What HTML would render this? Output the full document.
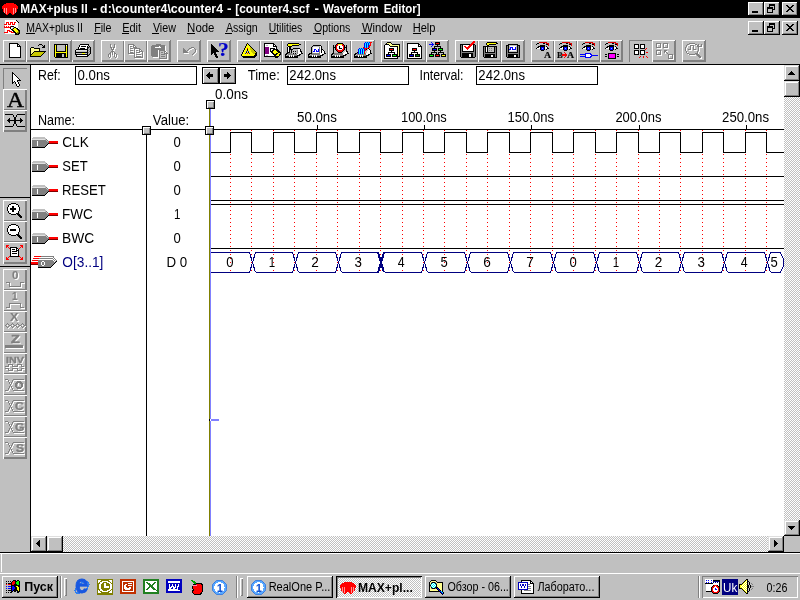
<!DOCTYPE html>
<html lang="en"><head><meta charset="utf-8"><title>MAX+plus II - d:\counter4\counter4 - [counter4.scf - Waveform Editor]</title>
<style>
html,body{margin:0;padding:0;}
body{width:800px;height:600px;overflow:hidden;background:#c0c0c0;position:relative;font-family:"Liberation Sans",sans-serif;font-size:13px;}
div,span,svg.i,b.t,i.ul{position:absolute;box-sizing:border-box;}
i.ul{height:1px;background:#000;}
.t{white-space:nowrap;line-height:1;display:block;will-change:transform;-webkit-text-stroke:0.15px;}
svg.i{overflow:visible;shape-rendering:crispEdges;}
svg.tx{font-family:'Liberation Sans',sans-serif;will-change:opacity;}
.up{box-shadow:inset 1px 1px 0 #fff,inset -1px -1px 0 #808080;background:#c0c0c0;}
.dn1{box-shadow:inset 1px 1px 0 #808080;background:#c0c0c0;}
.sb{box-shadow:inset -1px -1px 0 #000,inset 1px 1px 0 #dfdfdf,inset -2px -2px 0 #808080,inset 2px 2px 0 #fff;background:#c0c0c0;}
.tbl{box-shadow:inset -1px 0 0 #808080,inset 1px 1px 0 #fff,inset -2px -2px 0 #808080;background:#c0c0c0;}
.pbl{box-shadow:inset 1px 1px 0 #fff,inset -2px -2px 0 #808080;background:#c0c0c0;}
.tb{box-shadow:inset 1px 1px 0 #fff,inset -1px -2px 0 #808080;background:#c0c0c0;}
.pb{box-shadow:inset 1px 1px 0 #fff,inset -2px -1px 0 #808080;background:#c0c0c0;}
.up2{box-shadow:inset -1px -1px 0 #000,inset 1px 1px 0 #fff,inset -2px -2px 0 #808080;background:#c0c0c0;}
.dn{box-shadow:inset 1px 1px 0 #808080,inset -1px -1px 0 #fff;background:#c0c0c0;}
.dn2{box-shadow:inset 1px 1px 0 #000,inset -1px -1px 0 #fff,inset 2px 2px 0 #808080;}
.chk{background:conic-gradient(#fff 25%,#c0c0c0 0 50%,#fff 0 75%,#c0c0c0 0) 0 0/2px 2px;}
</style></head><body>
<div id="titlebar" style="left:0;top:0;width:800px;height:18px;background:#000"></div>
<svg class="i tx" style="left:0;top:0" width="1" height="1"><text transform="translate(20.20,13) scale(0.9119,0.9890)" font-size="13" fill="#fff" font-weight="bold">MAX+plus II</text></svg>
<svg class="i tx" style="left:0;top:0" width="1" height="1"><text transform="translate(92.48,13) scale(1.0370,0.9890)" font-size="13" fill="#fff" font-weight="bold">-</text></svg>
<svg class="i tx" style="left:0;top:0" width="1" height="1"><text transform="translate(100.12,13) scale(0.9507,0.9890)" font-size="13" fill="#fff" font-weight="bold">d:\counter4\counter4</text></svg>
<svg class="i tx" style="left:0;top:0" width="1" height="1"><text transform="translate(226.98,13) scale(1.0370,0.9890)" font-size="13" fill="#fff" font-weight="bold">-</text></svg>
<svg class="i tx" style="left:0;top:0" width="1" height="1"><text transform="translate(235.32,13) scale(0.9076,0.9890)" font-size="13" fill="#fff" font-weight="bold">[counter4.scf</text></svg>
<svg class="i tx" style="left:0;top:0" width="1" height="1"><text transform="translate(314.48,13) scale(1.0370,0.9890)" font-size="13" fill="#fff" font-weight="bold">-</text></svg>
<svg class="i tx" style="left:0;top:0" width="1" height="1"><text transform="translate(323.00,13) scale(0.8925,0.9890)" font-size="13" fill="#fff" font-weight="bold">Waveform</text></svg>
<svg class="i tx" style="left:0;top:0" width="1" height="1"><text transform="translate(383.63,13) scale(0.8845,0.9890)" font-size="13" fill="#fff" font-weight="bold">Editor]</text></svg>
<div class="up2" style="left:748px;top:2px;width:16px;height:14px"></div>
<svg class="i" style="left:748px;top:2px" width="16" height="14" viewBox="0 0 16 14" ><rect x="4" y="9" width="6" height="2" fill="#000"/></svg>
<div class="up2" style="left:764px;top:2px;width:16px;height:14px"></div>
<svg class="i" style="left:764px;top:2px" width="16" height="14" viewBox="0 0 16 14" ><rect x="5" y="2" width="6" height="2" fill="#000"/><rect x="5" y="4" width="1" height="2" fill="#000"/><rect x="10" y="4" width="1" height="4" fill="#000"/><rect x="9" y="7" width="1" height="1" fill="#000"/><rect x="3" y="5" width="6" height="2" fill="#000"/><rect x="3" y="7" width="1" height="4" fill="#000"/><rect x="8" y="7" width="1" height="4" fill="#000"/><rect x="3" y="10" width="6" height="1" fill="#000"/></svg>
<div class="up2" style="left:782px;top:2px;width:16px;height:14px"></div>
<svg class="i" style="left:782px;top:2px" width="16" height="14" viewBox="0 0 16 14" ><path d="M4 3h2v1h1v1h2v-1h1v-1h2v1h-1v1h-1v1h-1v1h1v1h1v1h1v1h-2v-1h-1v-1h-2v1h-1v1h-2v-1h1v-1h1v-1h1v-1h-1v-1h-1v-1h-1z" fill="#000"/></svg>
<div class="up2" style="left:748px;top:21px;width:16px;height:14px"></div>
<svg class="i" style="left:748px;top:21px" width="16" height="14" viewBox="0 0 16 14" ><rect x="4" y="9" width="6" height="2" fill="#000"/></svg>
<div class="up2" style="left:764px;top:21px;width:16px;height:14px"></div>
<svg class="i" style="left:764px;top:21px" width="16" height="14" viewBox="0 0 16 14" ><rect x="5" y="2" width="6" height="2" fill="#000"/><rect x="5" y="4" width="1" height="2" fill="#000"/><rect x="10" y="4" width="1" height="4" fill="#000"/><rect x="9" y="7" width="1" height="1" fill="#000"/><rect x="3" y="5" width="6" height="2" fill="#000"/><rect x="3" y="7" width="1" height="4" fill="#000"/><rect x="8" y="7" width="1" height="4" fill="#000"/><rect x="3" y="10" width="6" height="1" fill="#000"/></svg>
<div class="up2" style="left:782px;top:21px;width:16px;height:14px"></div>
<svg class="i" style="left:782px;top:21px" width="16" height="14" viewBox="0 0 16 14" ><path d="M4 3h2v1h1v1h2v-1h1v-1h2v1h-1v1h-1v1h-1v1h1v1h1v1h1v1h-2v-1h-1v-1h-2v1h-1v1h-2v-1h1v-1h1v-1h1v-1h-1v-1h-1v-1h-1z" fill="#000"/></svg>
<svg class="i tx" style="left:0;top:0" width="1" height="1"><text transform="translate(26.19,32) scale(0.8059,0.9890)" font-size="13" fill="#000">MAX+plus II</text></svg>
<i class="ul" style="left:26px;top:33px;width:9px"></i>
<svg class="i tx" style="left:0;top:0" width="1" height="1"><text transform="translate(94.17,32) scale(0.8258,0.9890)" font-size="13" fill="#000">File</text></svg>
<i class="ul" style="left:94px;top:33px;width:7px"></i>
<svg class="i tx" style="left:0;top:0" width="1" height="1"><text transform="translate(122.15,32) scale(0.8471,0.9890)" font-size="13" fill="#000">Edit</text></svg>
<i class="ul" style="left:122px;top:33px;width:7px"></i>
<svg class="i tx" style="left:0;top:0" width="1" height="1"><text transform="translate(152.90,32) scale(0.8251,0.9890)" font-size="13" fill="#000">View</text></svg>
<i class="ul" style="left:152px;top:33px;width:7px"></i>
<svg class="i tx" style="left:0;top:0" width="1" height="1"><text transform="translate(187.12,32) scale(0.8814,0.9890)" font-size="13" fill="#000">Node</text></svg>
<i class="ul" style="left:187px;top:33px;width:8px"></i>
<svg class="i tx" style="left:0;top:0" width="1" height="1"><text transform="translate(226.00,32) scale(0.8131,0.9890)" font-size="13" fill="#000">Assign</text></svg>
<i class="ul" style="left:225px;top:33px;width:7px"></i>
<svg class="i tx" style="left:0;top:0" width="1" height="1"><text transform="translate(268.70,32) scale(0.8025,0.9890)" font-size="13" fill="#000">Utilities</text></svg>
<i class="ul" style="left:269px;top:33px;width:8px"></i>
<svg class="i tx" style="left:0;top:0" width="1" height="1"><text transform="translate(313.99,32) scale(0.8114,0.9890)" font-size="13" fill="#000">Options</text></svg>
<i class="ul" style="left:313px;top:33px;width:8px"></i>
<svg class="i tx" style="left:0;top:0" width="1" height="1"><text transform="translate(361.89,32) scale(0.8672,0.9890)" font-size="13" fill="#000">Window</text></svg>
<i class="ul" style="left:361px;top:33px;width:11px"></i>
<svg class="i tx" style="left:0;top:0" width="1" height="1"><text transform="translate(412.65,32) scale(0.8515,0.9890)" font-size="13" fill="#000">Help</text></svg>
<i class="ul" style="left:413px;top:33px;width:8px"></i>
<div id="toolbar" style="left:0;top:38px;width:800px;height:26px">
<div class="tb" style="left:3px;top:2px;width:23px;height:22px"></div>
<div class="tb" style="left:26px;top:2px;width:23px;height:22px"></div>
<div class="tb" style="left:49px;top:2px;width:23px;height:22px"></div>
<div class="tbl" style="left:72px;top:2px;width:23px;height:22px"></div>
<div class="tb" style="left:101px;top:2px;width:23px;height:22px"></div>
<div class="tb" style="left:124px;top:2px;width:23px;height:22px"></div>
<div class="tbl" style="left:147px;top:2px;width:24px;height:22px"></div>
<div class="tbl" style="left:177px;top:2px;width:24px;height:22px"></div>
<div class="tbl" style="left:207px;top:2px;width:24px;height:22px"></div>
<div class="tb" style="left:237px;top:2px;width:23px;height:22px"></div>
<div class="tb" style="left:260px;top:2px;width:22px;height:22px"></div>
<div class="tb" style="left:282px;top:2px;width:23px;height:22px"></div>
<div class="tb" style="left:305px;top:2px;width:23px;height:22px"></div>
<div class="tb" style="left:328px;top:2px;width:23px;height:22px"></div>
<div class="tbl" style="left:351px;top:2px;width:24px;height:22px"></div>
<div class="tb" style="left:381px;top:2px;width:22px;height:22px"></div>
<div class="tb" style="left:403px;top:2px;width:23px;height:22px"></div>
<div class="tbl" style="left:426px;top:2px;width:23px;height:22px"></div>
<div class="tb" style="left:455px;top:2px;width:23px;height:22px"></div>
<div class="tb" style="left:478px;top:2px;width:23px;height:22px"></div>
<div class="tbl" style="left:501px;top:2px;width:24px;height:22px"></div>
<div class="tb" style="left:531px;top:2px;width:23px;height:22px"></div>
<div class="tb" style="left:554px;top:2px;width:23px;height:22px"></div>
<div class="tb" style="left:577px;top:2px;width:23px;height:22px"></div>
<div class="tbl" style="left:600px;top:2px;width:23px;height:22px"></div>
<div class="dn1" style="left:629px;top:2px;width:23px;height:22px"></div>
<div class="tbl" style="left:652px;top:2px;width:24px;height:22px"></div>
<div class="tbl" style="left:682px;top:2px;width:24px;height:22px"></div>
</div>
<div style="left:70px;top:41px;width:2px;height:21px;background:#808080"></div>
<div style="left:71px;top:40px;width:1px;height:1px;background:#808080"></div>
<div style="left:72px;top:41px;width:1px;height:19px;background:#c0c0c0"></div>
<span class="t" style="left:217.5px;top:40.76px;font-size:18px;color:#0000c8;font-family:'Liberation Serif',serif;font-weight:bold;transform:scale(1.2,1);transform-origin:0 0.8465em;">?</span>
<span class="t" style="left:543.7px;top:50.55px;font-size:8.8px;color:#000;font-family:'Liberation Serif',serif;font-weight:bold;transform:scale(1.12,1);transform-origin:0 0.8465em;">A</span>
<span class="t" style="left:557px;top:50.55px;font-size:8.8px;color:#000;font-family:'Liberation Serif',serif;font-weight:bold;transform:scale(0.95,1);transform-origin:0 0.8465em;">B</span>
<span class="t" style="left:567px;top:50.55px;font-size:8.8px;color:#000;font-family:'Liberation Serif',serif;font-weight:bold;transform:scale(1.12,1);transform-origin:0 0.8465em;">A</span>
<div style="left:0;top:64px;width:800px;height:1px;background:#000"></div>
<div id="client" style="left:31px;top:65px;width:753px;height:471px;background:#fff"></div>
<div style="left:30px;top:64px;width:1px;height:488px;background:#000"></div>
<div style="left:0;top:552px;width:800px;height:1px;background:#000"></div>
<div style="left:0;top:553px;width:800px;height:1px;background:#fff"></div>
<div style="left:0;top:573px;width:800px;height:1px;background:#fff"></div>
<div style="left:1px;top:554px;width:1px;height:18px;background:#fff"></div>
<div class="dn1" style="left:3px;top:68px;width:24px;height:21px"></div>
<div class="pb" style="left:3px;top:89px;width:24px;height:21px"></div>
<div class="pbl" style="left:3px;top:110px;width:24px;height:22px"></div>
<div class="pb" style="left:3px;top:200px;width:24px;height:21px"></div>
<div class="pb" style="left:3px;top:221px;width:24px;height:21px"></div>
<div class="pbl" style="left:3px;top:242px;width:24px;height:22px"></div>
<div class="pb" style="left:3px;top:269px;width:24px;height:21px"></div>
<div class="pb" style="left:3px;top:290px;width:24px;height:21px"></div>
<div class="pb" style="left:3px;top:311px;width:24px;height:21px"></div>
<div class="pb" style="left:3px;top:332px;width:24px;height:21px"></div>
<div class="pb" style="left:3px;top:353px;width:24px;height:21px"></div>
<div class="pb" style="left:3px;top:374px;width:24px;height:21px"></div>
<div class="pb" style="left:3px;top:395px;width:24px;height:21px"></div>
<div class="pb" style="left:3px;top:416px;width:24px;height:21px"></div>
<div class="pbl" style="left:3px;top:437px;width:24px;height:22px"></div>
<span class="t" style="left:7.2px;top:90.22px;font-size:21px;color:#000;font-family:'Liberation Serif',serif;transform:scale(1.12,1);transform-origin:0 0.8465em;-webkit-text-stroke:0.45px #000;">A</span>
<span class="t" style="left:12px;top:270.54px;font-size:10px;color:#808080;font-family:'Liberation Sans',sans-serif;font-weight:bold;text-shadow:1px 1px 0 #fff;transform:scale(1.15,1);transform-origin:0 0.8465em;">0</span>
<span class="t" style="left:12px;top:291.54px;font-size:10px;color:#808080;font-family:'Liberation Sans',sans-serif;font-weight:bold;text-shadow:1px 1px 0 #fff;">1</span>
<span class="t" style="left:10px;top:312.54px;font-size:10px;color:#808080;font-family:'Liberation Sans',sans-serif;font-weight:bold;text-shadow:1px 1px 0 #fff;transform:scale(1.25,1);transform-origin:0 0.8465em;">X</span>
<span class="t" style="left:10.5px;top:333.69px;font-size:11px;color:#808080;font-family:'Liberation Sans',sans-serif;font-weight:bold;text-shadow:1px 1px 0 #fff;transform:scale(1.3,1);transform-origin:0 0.8465em;-webkit-text-stroke:0.5px #808080;">Z</span>
<span class="t" style="left:5.5px;top:354.96px;font-size:9.5px;color:#808080;font-family:'Liberation Sans',sans-serif;font-weight:bold;text-shadow:1px 1px 0 #fff;transform:scale(1.13,1);transform-origin:0 0.8465em;-webkit-text-stroke:0.4px #808080;">INV</span>
<span class="t" style="left:15px;top:400.69px;font-size:11px;color:#808080;font-family:'Liberation Sans',sans-serif;font-weight:bold;text-shadow:1px 1px 0 #fff;transform:scale(1.1,1);transform-origin:0 0.8465em;-webkit-text-stroke:0.4px #808080;">C</span>
<span class="t" style="left:15px;top:421.69px;font-size:11px;color:#808080;font-family:'Liberation Sans',sans-serif;font-weight:bold;text-shadow:1px 1px 0 #fff;transform:scale(1.1,1);transform-origin:0 0.8465em;-webkit-text-stroke:0.4px #808080;">G</span>
<span class="t" style="left:15.5px;top:442.69px;font-size:11px;color:#808080;font-family:'Liberation Sans',sans-serif;font-weight:bold;text-shadow:1px 1px 0 #fff;transform:scale(1.1,1);transform-origin:0 0.8465em;-webkit-text-stroke:0.4px #808080;">S</span>
<div style="left:0;top:197px;width:30px;height:1px;background:#000"></div>
<div style="left:0;top:266px;width:30px;height:1px;background:#000"></div>
<div class="chk" style="left:784px;top:65px;width:16px;height:471px"></div>
<div class="chk" style="left:31px;top:536px;width:753px;height:16px"></div>
<div style="left:784px;top:536px;width:16px;height:16px;background:#c0c0c0"></div>
<div class="sb" style="left:784px;top:65px;width:16px;height:16px"></div>
<svg class="i" style="left:784px;top:65px" width="16" height="16" viewBox="0 0 16 16" ><path d="M7 6h1v1h1v1h1v1h1v1h-7v-1h1v-1h1v-1h1z" fill="#000"/></svg>
<div class="sb" style="left:784px;top:81px;width:16px;height:16px"></div>
<div class="sb" style="left:784px;top:520px;width:16px;height:16px"></div>
<svg class="i" style="left:784px;top:520px" width="16" height="16" viewBox="0 0 16 16" ><path d="M4 6h7v1h-1v1h-1v1h-1v1h-1v-1h-1v-1h-1v-1h-1z" fill="#000"/></svg>
<div class="sb" style="left:31px;top:536px;width:16px;height:16px"></div>
<svg class="i" style="left:31px;top:536px" width="16" height="16" viewBox="0 0 16 16" ><path d="M8 4h1v7h-1v-1h-1v-1h-1v-1h-1v-1h1v-1h1v-1h1z" fill="#000"/></svg>
<div class="sb" style="left:47px;top:536px;width:16px;height:16px"></div>
<div class="sb" style="left:768px;top:536px;width:16px;height:16px"></div>
<svg class="i" style="left:768px;top:536px" width="16" height="16" viewBox="0 0 16 16" ><path d="M6 4h1v1h1v1h1v1h1v1h-1v1h-1v1h-1v1h-1z" fill="#000"/></svg>
<svg class="i tx" style="left:0;top:0" width="1" height="1"><text transform="translate(38.05,80) scale(0.9480,1.0989)" font-size="13" fill="#000">Ref:</text></svg>
<div style="left:75px;top:66px;width:122px;height:19px;border:1px solid #000;background:#fff"></div>
<svg class="i tx" style="left:0;top:0" width="1" height="1"><text transform="translate(77.49,80) scale(1.0202,1.0989)" font-size="13" fill="#000">0.0ns</text></svg>
<div style="left:202px;top:67px;width:34px;height:17px;background:#000"></div>
<div class="up" style="left:203px;top:68px;width:15px;height:15px"></div>
<div class="up" style="left:220px;top:68px;width:15px;height:15px"></div>
<svg class="i" style="left:206px;top:72px" width="7" height="7" viewBox="0 0 7 7" ><path d="M3 0h1v2h3v3h-3v2h-1v-1h-1v-1h-1v-1h-1v-1h1v-1h1v-1h1z" fill="#000"/></svg>
<svg class="i" style="left:224px;top:72px" width="7" height="7" viewBox="0 0 7 7" ><path d="M4 0h-1v2h-3v3h3v2h1v-1h1v-1h1v-1h1v-1h-1v-1h-1v-1h-1z" fill="#000"/></svg>
<svg class="i tx" style="left:0;top:0" width="1" height="1"><text transform="translate(247.75,80) scale(1.0024,1.0989)" font-size="13" fill="#000">Time:</text></svg>
<div style="left:287px;top:66px;width:122px;height:19px;border:1px solid #000;background:#fff"></div>
<svg class="i tx" style="left:0;top:0" width="1" height="1"><text transform="translate(289.37,80) scale(1.0083,1.0989)" font-size="13" fill="#000">242.0ns</text></svg>
<svg class="i tx" style="left:0;top:0" width="1" height="1"><text transform="translate(419.43,80) scale(0.9545,1.0989)" font-size="13" fill="#000">Interval:</text></svg>
<div style="left:476px;top:66px;width:122px;height:19px;border:1px solid #000;background:#fff"></div>
<svg class="i tx" style="left:0;top:0" width="1" height="1"><text transform="translate(478.37,80) scale(1.0083,1.0989)" font-size="13" fill="#000">242.0ns</text></svg>
<svg class="i tx" style="left:0;top:0" width="1" height="1"><text transform="translate(215.08,99) scale(1.0332,1.0989)" font-size="13" fill="#000">0.0ns</text></svg>
<svg class="i tx" style="left:0;top:0" width="1" height="1"><text transform="translate(38.03,125) scale(0.9689,1.0989)" font-size="13" fill="#000">Name:</text></svg>
<svg class="i tx" style="left:0;top:0" width="1" height="1"><text transform="translate(152.87,125) scale(1.0108,1.0989)" font-size="13" fill="#000">Value:</text></svg>
<svg class="i" id="wave" style="left:0;top:0" width="800" height="600" viewBox="0 0 800 600" font-family="Liberation Sans, sans-serif"><line x1="230.5" y1="130" x2="230.5" y2="272" stroke="#f00" stroke-width="1" stroke-dasharray="1 3"/><line x1="251.5" y1="130" x2="251.5" y2="272" stroke="#f00" stroke-width="1" stroke-dasharray="1 3"/><line x1="273.5" y1="130" x2="273.5" y2="272" stroke="#f00" stroke-width="1" stroke-dasharray="1 3"/><line x1="294.5" y1="130" x2="294.5" y2="272" stroke="#f00" stroke-width="1" stroke-dasharray="1 3"/><line x1="316.5" y1="130" x2="316.5" y2="272" stroke="#f00" stroke-width="1" stroke-dasharray="1 3"/><line x1="337.5" y1="130" x2="337.5" y2="272" stroke="#f00" stroke-width="1" stroke-dasharray="1 3"/><line x1="359.5" y1="130" x2="359.5" y2="272" stroke="#f00" stroke-width="1" stroke-dasharray="1 3"/><line x1="380.5" y1="130" x2="380.5" y2="272" stroke="#f00" stroke-width="1" stroke-dasharray="1 3"/><line x1="402.5" y1="130" x2="402.5" y2="272" stroke="#f00" stroke-width="1" stroke-dasharray="1 3"/><line x1="423.5" y1="130" x2="423.5" y2="272" stroke="#f00" stroke-width="1" stroke-dasharray="1 3"/><line x1="444.5" y1="130" x2="444.5" y2="272" stroke="#f00" stroke-width="1" stroke-dasharray="1 3"/><line x1="466.5" y1="130" x2="466.5" y2="272" stroke="#f00" stroke-width="1" stroke-dasharray="1 3"/><line x1="487.5" y1="130" x2="487.5" y2="272" stroke="#f00" stroke-width="1" stroke-dasharray="1 3"/><line x1="509.5" y1="130" x2="509.5" y2="272" stroke="#f00" stroke-width="1" stroke-dasharray="1 3"/><line x1="530.5" y1="130" x2="530.5" y2="272" stroke="#f00" stroke-width="1" stroke-dasharray="1 3"/><line x1="552.5" y1="130" x2="552.5" y2="272" stroke="#f00" stroke-width="1" stroke-dasharray="1 3"/><line x1="573.5" y1="130" x2="573.5" y2="272" stroke="#f00" stroke-width="1" stroke-dasharray="1 3"/><line x1="595.5" y1="130" x2="595.5" y2="272" stroke="#f00" stroke-width="1" stroke-dasharray="1 3"/><line x1="616.5" y1="130" x2="616.5" y2="272" stroke="#f00" stroke-width="1" stroke-dasharray="1 3"/><line x1="638.5" y1="130" x2="638.5" y2="272" stroke="#f00" stroke-width="1" stroke-dasharray="1 3"/><line x1="659.5" y1="130" x2="659.5" y2="272" stroke="#f00" stroke-width="1" stroke-dasharray="1 3"/><line x1="680.5" y1="130" x2="680.5" y2="272" stroke="#f00" stroke-width="1" stroke-dasharray="1 3"/><line x1="702.5" y1="130" x2="702.5" y2="272" stroke="#f00" stroke-width="1" stroke-dasharray="1 3"/><line x1="723.5" y1="130" x2="723.5" y2="272" stroke="#f00" stroke-width="1" stroke-dasharray="1 3"/><line x1="745.5" y1="130" x2="745.5" y2="272" stroke="#f00" stroke-width="1" stroke-dasharray="1 3"/><line x1="766.5" y1="130" x2="766.5" y2="272" stroke="#f00" stroke-width="1" stroke-dasharray="1 3"/><rect x="31" y="129" width="753" height="1" fill="#000"/><rect x="317" y="125" width="1" height="4" fill="#000"/><text transform="translate(296.99,122) scale(1.0230,1.0989)" font-size="13" fill="#000">50.0ns</text><rect x="424" y="125" width="1" height="4" fill="#000"/><text transform="translate(401.01,122) scale(0.9899,1.0989)" font-size="13" fill="#000">100.0ns</text><rect x="531" y="125" width="1" height="4" fill="#000"/><text transform="translate(507.49,122) scale(1.0056,1.0989)" font-size="13" fill="#000">150.0ns</text><rect x="639" y="125" width="1" height="4" fill="#000"/><text transform="translate(615.38,122) scale(0.9972,1.0989)" font-size="13" fill="#000">200.0ns</text><rect x="746" y="125" width="1" height="4" fill="#000"/><text transform="translate(722.07,122) scale(1.0150,1.0989)" font-size="13" fill="#000">250.0ns</text><rect x="146" y="130" width="1" height="406" fill="#000"/><rect x="209" y="109" width="1" height="427" fill="#808000"/><rect x="210" y="109" width="1" height="427" fill="#8080ff"/><polyline points="211,152.5 230.5,152.5 230.5,132.5 251.5,132.5 251.5,152.5 273.5,152.5 273.5,132.5 294.5,132.5 294.5,152.5 316.5,152.5 316.5,132.5 337.5,132.5 337.5,152.5 359.5,152.5 359.5,132.5 380.5,132.5 380.5,152.5 402.5,152.5 402.5,132.5 423.5,132.5 423.5,152.5 444.5,152.5 444.5,132.5 466.5,132.5 466.5,152.5 487.5,152.5 487.5,132.5 509.5,132.5 509.5,152.5 530.5,152.5 530.5,132.5 552.5,132.5 552.5,152.5 573.5,152.5 573.5,132.5 595.5,132.5 595.5,152.5 616.5,152.5 616.5,132.5 638.5,132.5 638.5,152.5 659.5,152.5 659.5,132.5 680.5,132.5 680.5,152.5 702.5,152.5 702.5,132.5 723.5,132.5 723.5,152.5 745.5,152.5 745.5,132.5 766.5,132.5 766.5,152.5 784,152.5" stroke="#000" stroke-width="1" fill="none"/><rect x="211" y="176" width="573" height="1" fill="#000"/><rect x="211" y="200" width="573" height="1" fill="#000"/><rect x="211" y="204" width="573" height="1" fill="#000"/><rect x="211" y="248" width="573" height="1" fill="#000"/><text transform="translate(226.35,267) scale(1.0080,1.0989)" font-size="13" fill="#000">0</text><text transform="translate(268.71,267) scale(0.8889,1.0989)" font-size="13" fill="#000">1</text><text transform="translate(311.29,267) scale(1.0500,1.0989)" font-size="13" fill="#000">2</text><text transform="translate(354.44,267) scale(1.0286,1.0989)" font-size="13" fill="#000">3</text><text transform="translate(397.71,267) scale(0.9509,1.0989)" font-size="13" fill="#000">4</text><text transform="translate(440.45,267) scale(1.0080,1.0989)" font-size="13" fill="#000">5</text><text transform="translate(483.29,267) scale(1.0500,1.0989)" font-size="13" fill="#000">6</text><text transform="translate(526.29,267) scale(1.0500,1.0989)" font-size="13" fill="#000">7</text><text transform="translate(569.45,267) scale(1.0080,1.0989)" font-size="13" fill="#000">0</text><text transform="translate(612.71,267) scale(0.8889,1.0989)" font-size="13" fill="#000">1</text><text transform="translate(654.79,267) scale(1.0500,1.0989)" font-size="13" fill="#000">2</text><text transform="translate(697.44,267) scale(1.0286,1.0989)" font-size="13" fill="#000">3</text><text transform="translate(740.71,267) scale(0.9509,1.0989)" font-size="13" fill="#000">4</text><text transform="translate(770.45,267) scale(1.0080,1.0989)" font-size="13" fill="#000">5</text><path d="M211 252.5H249.5L255.5 272.5M211 272.5H249.5L255.5 252.5M255.5 252.5H292.5L298.5 272.5M255.5 272.5H292.5L298.5 252.5M298.5 252.5H335.5L341.5 272.5M298.5 272.5H335.5L341.5 252.5M341.5 252.5H378.5L384.5 272.5M341.5 272.5H378.5L384.5 252.5M377.5 252.5L383.5 272.5M377.5 272.5L383.5 252.5M384.5 252.5H421.5L427.5 272.5M384.5 272.5H421.5L427.5 252.5M427.5 252.5H464.5L470.5 272.5M427.5 272.5H464.5L470.5 252.5M470.5 252.5H507.5L513.5 272.5M470.5 272.5H507.5L513.5 252.5M513.5 252.5H550.5L556.5 272.5M513.5 272.5H550.5L556.5 252.5M556.5 252.5H593.5L599.5 272.5M556.5 272.5H593.5L599.5 252.5M599.5 252.5H636.5L642.5 272.5M599.5 272.5H636.5L642.5 252.5M642.5 252.5H678.5L684.5 272.5M642.5 272.5H678.5L684.5 252.5M684.5 252.5H721.5L727.5 272.5M684.5 272.5H721.5L727.5 252.5M727.5 252.5H764.5L770.5 272.5M727.5 272.5H764.5L770.5 252.5M770.5 252.5H780L783.5 258.500V266.500L780 272.5H770.5" fill="none" stroke="#000080" stroke-width="1" shape-rendering="crispEdges"/><rect x="206" y="100" width="9" height="9" fill="#000"/><rect x="207" y="101" width="7" height="7" fill="#fff"/><rect x="208" y="102" width="6" height="6" fill="#808080"/><rect x="208" y="102" width="5" height="5" fill="#c0c0c0"/><rect x="205" y="126" width="9" height="9" fill="#000"/><rect x="206" y="127" width="7" height="7" fill="#fff"/><rect x="207" y="128" width="6" height="6" fill="#808080"/><rect x="207" y="128" width="5" height="5" fill="#c0c0c0"/><rect x="142" y="126" width="9" height="9" fill="#000"/><rect x="143" y="127" width="7" height="7" fill="#fff"/><rect x="144" y="128" width="6" height="6" fill="#808080"/><rect x="144" y="128" width="5" height="5" fill="#c0c0c0"/><rect x="209" y="419" width="1" height="2" fill="#000"/><rect x="210" y="419" width="1" height="2" fill="#fff"/><rect x="211" y="419" width="8" height="2" fill="#8080ff"/></svg>
<svg class="i tx" style="left:0;top:0" width="1" height="1"><text transform="translate(62.35,147) scale(1.0408,1.0989)" font-size="13" fill="#000">CLK</text></svg>
<svg class="i tx" style="left:0;top:0" width="1" height="1"><text transform="translate(173.50,147) scale(1.0080,1.0989)" font-size="13" fill="#000">0</text></svg>
<svg class="i tx" style="left:0;top:0" width="1" height="1"><text transform="translate(62.37,171) scale(1.0051,1.0989)" font-size="13" fill="#000">SET</text></svg>
<svg class="i tx" style="left:0;top:0" width="1" height="1"><text transform="translate(173.50,171) scale(1.0080,1.0989)" font-size="13" fill="#000">0</text></svg>
<svg class="i tx" style="left:0;top:0" width="1" height="1"><text transform="translate(61.99,195) scale(1.0119,1.0989)" font-size="13" fill="#000">RESET</text></svg>
<svg class="i tx" style="left:0;top:0" width="1" height="1"><text transform="translate(173.50,195) scale(1.0080,1.0989)" font-size="13" fill="#000">0</text></svg>
<svg class="i tx" style="left:0;top:0" width="1" height="1"><text transform="translate(61.96,219) scale(1.0418,1.0989)" font-size="13" fill="#000">FWC</text></svg>
<svg class="i tx" style="left:0;top:0" width="1" height="1"><text transform="translate(174.11,219) scale(0.8889,1.0989)" font-size="13" fill="#000">1</text></svg>
<svg class="i tx" style="left:0;top:0" width="1" height="1"><text transform="translate(61.94,243) scale(1.0609,1.0989)" font-size="13" fill="#000">BWC</text></svg>
<svg class="i tx" style="left:0;top:0" width="1" height="1"><text transform="translate(173.50,243) scale(1.0080,1.0989)" font-size="13" fill="#000">0</text></svg>
<svg class="i tx" style="left:0;top:0" width="1" height="1"><text transform="translate(62.34,267) scale(1.0533,1.0989)" font-size="13" fill="#000080">O[3..1]</text></svg>
<svg class="i tx" style="left:0;top:0" width="1" height="1"><text transform="translate(166.48,267) scale(1.0240,1.0989)" font-size="13" fill="#000">D 0</text></svg>
<div class="up2" style="left:2px;top:576px;width:56px;height:22px"></div>
<svg class="i tx" style="left:0;top:0" width="1" height="1"><text transform="translate(24.16,591) scale(0.9614,0.9890)" font-size="13" fill="#000" font-weight="bold">Пуск</text></svg>
<div style="left:60px;top:576px;width:1px;height:22px;background:#808080"></div>
<div style="left:61px;top:576px;width:1px;height:22px;background:#fff"></div>
<div class="up" style="left:64px;top:578px;width:3px;height:18px"></div>
<div style="left:236px;top:576px;width:1px;height:22px;background:#808080"></div>
<div style="left:237px;top:576px;width:1px;height:22px;background:#fff"></div>
<div class="up" style="left:240px;top:578px;width:3px;height:18px"></div>
<div class="up2" style="left:247px;top:576px;width:86px;height:22px"></div>
<svg class="i tx" style="left:0;top:0" width="1" height="1"><text transform="translate(268.65,591) scale(0.8481,0.9890)" font-size="13" fill="#000">RealOne P...</text></svg>
<div class="dn2 chk" style="left:336px;top:576px;width:86px;height:22px"></div>
<svg class="i tx" style="left:0;top:0" width="1" height="1"><text transform="translate(357.88,592) scale(0.9330,0.9890)" font-size="13" fill="#000" font-weight="bold">MAX+pl...</text></svg>
<div class="up2" style="left:425px;top:576px;width:86px;height:22px"></div>
<svg class="i tx" style="left:0;top:0" width="1" height="1"><text transform="translate(447.48,591) scale(0.8262,0.9890)" font-size="13" fill="#000">Обзор - 06...</text></svg>
<div class="up2" style="left:514px;top:576px;width:86px;height:22px"></div>
<svg class="i tx" style="left:0;top:0" width="1" height="1"><text transform="translate(537.40,591) scale(0.8327,0.9890)" font-size="13" fill="#000">Лаборато...</text></svg>
<div style="left:698px;top:576px;width:1px;height:22px;background:#808080"></div>
<div style="left:699px;top:576px;width:1px;height:22px;background:#fff"></div>
<div class="dn" style="left:702px;top:576px;width:96px;height:22px"></div>
<div style="left:722px;top:579px;width:16px;height:16px;background:#000080"></div>
<svg class="i tx" style="left:0;top:0" width="1" height="1"><text transform="translate(723.11,592) scale(0.8941,0.9890)" font-size="13" fill="#fff">Uk</text></svg>
<svg class="i tx" style="left:0;top:0" width="1" height="1"><text transform="translate(766.59,592) scale(0.8247,0.9890)" font-size="13" fill="#000">0:26</text></svg>
<svg class="i" style="left:9px;top:43px" width="13" height="16" viewBox="0 0 13 16" ><path fill="#000" d="M0 0h9v1h-9zM0 1h1v1h-1zM8 1h2v1h-2zM0 2h1v1h-1zM8 2h1v1h-1zM10 2h1v1h-1zM0 3h1v1h-1zM8 3h4v1h-4zM0 4h1v1h-1zM11 4h1v1h-1zM0 5h1v1h-1zM11 5h1v1h-1zM0 6h1v1h-1zM11 6h1v1h-1zM0 7h1v1h-1zM11 7h1v1h-1zM0 8h1v1h-1zM11 8h1v1h-1zM0 9h1v1h-1zM11 9h1v1h-1zM0 10h1v1h-1zM11 10h1v1h-1zM0 11h1v1h-1zM11 11h1v1h-1zM0 12h1v1h-1zM11 12h1v1h-1zM0 13h1v1h-1zM11 13h1v1h-1zM0 14h12v1h-12z"/><path fill="#fff" d="M1 1h7v1h-7zM1 2h7v1h-7zM9 2h1v1h-1zM1 3h7v1h-7zM1 4h10v1h-10zM1 5h10v1h-10zM1 6h10v1h-10zM1 7h10v1h-10zM1 8h10v1h-10zM1 9h10v1h-10zM1 10h10v1h-10zM1 11h10v1h-10zM1 12h10v1h-10zM1 13h10v1h-10z"/></svg>
<svg class="i" style="left:30px;top:44px" width="17" height="14" viewBox="0 0 17 14" ><path fill="#000" d="M9 0h3v1h-3zM8 1h1v1h-1zM12 1h1v1h-1zM14 1h1v1h-1zM13 2h2v1h-2zM1 3h3v1h-3zM12 3h3v1h-3zM0 4h1v1h-1zM4 4h6v1h-6zM0 5h1v1h-1zM9 5h1v1h-1zM0 6h1v1h-1zM9 6h1v1h-1zM0 7h1v1h-1zM4 7h12v1h-12zM0 8h1v1h-1zM3 8h1v1h-1zM14 8h1v1h-1zM0 9h1v1h-1zM2 9h1v1h-1zM13 9h1v1h-1zM0 10h2v1h-2zM12 10h1v1h-1zM0 11h1v1h-1zM11 11h1v1h-1zM0 12h11v1h-11z"/><path fill="#ffff90" d="M1 4h3v1h-3zM1 5h8v1h-8zM1 6h8v1h-8zM1 7h3v1h-3zM1 8h2v1h-2zM1 9h1v1h-1z"/><path fill="#c8c800" d="M4 8h10v1h-10zM3 9h10v1h-10zM2 10h10v1h-10zM1 11h10v1h-10z"/></svg>
<svg class="i" style="left:54px;top:44px" width="15" height="15" viewBox="0 0 15 15" ><path fill="#000" d="M0 0h14v1h-14zM0 1h1v1h-1zM2 1h1v1h-1zM11 1h1v1h-1zM13 1h1v1h-1zM0 2h1v1h-1zM2 2h1v1h-1zM11 2h1v1h-1zM13 2h1v1h-1zM0 3h1v1h-1zM2 3h1v1h-1zM11 3h1v1h-1zM13 3h1v1h-1zM0 4h1v1h-1zM2 4h1v1h-1zM11 4h1v1h-1zM13 4h1v1h-1zM0 5h1v1h-1zM2 5h1v1h-1zM11 5h1v1h-1zM13 5h1v1h-1zM0 6h1v1h-1zM2 6h1v1h-1zM11 6h1v1h-1zM13 6h1v1h-1zM0 7h1v1h-1zM2 7h10v1h-10zM13 7h1v1h-1zM0 8h1v1h-1zM13 8h1v1h-1zM0 9h1v1h-1zM2 9h10v1h-10zM13 9h1v1h-1zM0 10h1v1h-1zM2 10h6v1h-6zM10 10h2v1h-2zM13 10h1v1h-1zM0 11h1v1h-1zM2 11h6v1h-6zM10 11h2v1h-2zM13 11h1v1h-1zM0 12h1v1h-1zM2 12h6v1h-6zM10 12h2v1h-2zM13 12h1v1h-1zM1 13h13v1h-13z"/><path fill="#ffff00" d="M1 1h1v1h-1zM1 2h1v1h-1zM12 2h1v1h-1zM1 3h1v1h-1zM12 3h1v1h-1zM1 4h1v1h-1zM12 4h1v1h-1zM1 5h1v1h-1zM12 5h1v1h-1zM1 6h1v1h-1zM12 6h1v1h-1zM1 7h1v1h-1zM12 7h1v1h-1zM1 8h12v1h-12zM1 9h1v1h-1zM12 9h1v1h-1zM1 10h1v1h-1zM12 10h1v1h-1zM1 11h1v1h-1zM12 11h1v1h-1zM1 12h1v1h-1zM12 12h1v1h-1z"/><path fill="#c0c0c0" d="M3 1h8v1h-8zM3 2h8v1h-8zM3 3h8v1h-8zM3 4h8v1h-8zM3 5h8v1h-8zM3 6h8v1h-8zM8 10h2v1h-2zM8 11h2v1h-2zM8 12h2v1h-2z"/><path fill="#fff" d="M12 1h1v1h-1z"/></svg>
<svg class="i" style="left:75px;top:44px" width="17" height="14" viewBox="0 0 17 14" ><path fill="#000" d="M5 0h9v1h-9zM4 1h1v1h-1zM13 1h1v1h-1zM4 2h1v1h-1zM6 2h5v1h-5zM12 2h1v1h-1zM14 2h1v1h-1zM3 3h1v1h-1zM12 3h2v1h-2zM15 3h1v1h-1zM3 4h1v1h-1zM5 4h5v1h-5zM12 4h1v1h-1zM15 4h1v1h-1zM1 5h12v1h-12zM15 5h1v1h-1zM0 6h1v1h-1zM12 6h1v1h-1zM15 6h1v1h-1zM0 7h1v1h-1zM12 7h1v1h-1zM15 7h1v1h-1zM0 8h13v1h-13zM15 8h1v1h-1zM0 9h1v1h-1zM12 9h1v1h-1zM15 9h1v1h-1zM0 10h13v1h-13zM14 10h1v1h-1zM1 11h1v1h-1zM12 11h2v1h-2zM1 12h12v1h-12z"/><path fill="#fff" d="M5 1h8v1h-8zM5 2h1v1h-1zM11 2h1v1h-1zM4 3h8v1h-8zM4 4h1v1h-1zM10 4h2v1h-2zM2 11h10v1h-10z"/><path fill="#808080" d="M14 3h1v1h-1zM13 4h1v1h-1zM14 5h1v1h-1zM13 6h1v1h-1zM14 7h1v1h-1zM13 8h1v1h-1zM14 9h1v1h-1zM13 10h1v1h-1z"/><path fill="#c0c0c0" d="M14 4h1v1h-1zM13 5h1v1h-1zM14 6h1v1h-1zM1 7h11v1h-11zM13 7h1v1h-1zM14 8h1v1h-1zM1 9h6v1h-6zM10 9h2v1h-2zM13 9h1v1h-1z"/><path fill="#e0e0e0" d="M1 6h11v1h-11z"/><path fill="#ffff00" d="M7 9h3v1h-3z"/></svg>
<svg class="i" style="left:108px;top:44px" width="10" height="15" viewBox="0 0 10 15" ><path fill="#808080" d="M2 0h1v1h-1zM6 0h1v1h-1zM2 1h1v1h-1zM6 1h1v1h-1zM2 2h1v1h-1zM6 2h1v1h-1zM2 3h2v1h-2zM5 3h2v1h-2zM3 4h1v1h-1zM5 4h1v1h-1zM3 5h3v1h-3zM4 6h1v1h-1zM3 7h3v1h-3zM2 8h1v1h-1zM4 8h1v1h-1zM6 8h1v1h-1zM1 9h2v1h-2zM4 9h1v1h-1zM6 9h2v1h-2zM0 10h1v1h-1zM2 10h1v1h-1zM4 10h1v1h-1zM6 10h1v1h-1zM8 10h1v1h-1zM0 11h1v1h-1zM2 11h1v1h-1zM6 11h1v1h-1zM8 11h1v1h-1zM0 12h1v1h-1zM2 12h1v1h-1zM6 12h1v1h-1zM8 12h1v1h-1zM1 13h1v1h-1zM7 13h1v1h-1z"/><path fill="#fff" d="M3 1h1v1h-1zM7 1h1v1h-1zM3 2h1v1h-1zM7 2h1v1h-1zM7 3h1v1h-1zM4 4h1v1h-1zM6 4h2v1h-2zM6 5h1v1h-1zM5 6h2v1h-2zM5 8h1v1h-1zM3 9h1v1h-1zM5 9h1v1h-1zM3 10h1v1h-1zM5 10h1v1h-1zM7 10h1v1h-1zM1 11h1v1h-1zM3 11h1v1h-1zM5 11h1v1h-1zM7 11h1v1h-1zM9 11h1v1h-1zM1 12h1v1h-1zM3 12h1v1h-1zM7 12h1v1h-1zM9 12h1v1h-1zM3 13h1v1h-1zM9 13h1v1h-1zM2 14h1v1h-1zM8 14h1v1h-1z"/></svg>
<svg class="i" style="left:128px;top:44px" width="16" height="15" viewBox="0 0 16 15" ><path fill="#808080" d="M0 0h6v1h-6zM0 1h1v1h-1zM5 1h2v1h-2zM0 2h1v1h-1zM2 2h2v1h-2zM5 2h1v1h-1zM7 2h1v1h-1zM0 3h1v1h-1zM5 3h4v1h-4zM0 4h1v1h-1zM2 4h3v1h-3zM6 4h6v1h-6zM0 5h1v1h-1zM6 5h1v1h-1zM11 5h2v1h-2zM0 6h1v1h-1zM2 6h3v1h-3zM6 6h1v1h-1zM8 6h2v1h-2zM11 6h1v1h-1zM13 6h1v1h-1zM0 7h1v1h-1zM6 7h1v1h-1zM11 7h4v1h-4zM0 8h1v1h-1zM2 8h3v1h-3zM6 8h1v1h-1zM8 8h4v1h-4zM14 8h1v1h-1zM0 9h7v1h-7zM14 9h1v1h-1zM6 10h1v1h-1zM8 10h5v1h-5zM14 10h1v1h-1zM6 11h1v1h-1zM14 11h1v1h-1zM6 12h1v1h-1zM8 12h5v1h-5zM14 12h1v1h-1zM6 13h9v1h-9z"/><path fill="#fff" d="M1 1h4v1h-4zM1 2h1v1h-1zM6 2h1v1h-1zM1 3h1v1h-1zM3 3h2v1h-2zM1 4h1v1h-1zM1 5h1v1h-1zM3 5h3v1h-3zM7 5h4v1h-4zM1 6h1v1h-1zM7 6h1v1h-1zM12 6h1v1h-1zM1 7h1v1h-1zM3 7h3v1h-3zM7 7h1v1h-1zM9 7h2v1h-2zM1 8h1v1h-1zM7 8h1v1h-1zM12 8h2v1h-2zM15 8h1v1h-1zM7 9h1v1h-1zM9 9h4v1h-4zM15 9h1v1h-1zM1 10h5v1h-5zM7 10h1v1h-1zM15 10h1v1h-1zM7 11h1v1h-1zM9 11h5v1h-5zM15 11h1v1h-1zM7 12h1v1h-1zM15 12h1v1h-1zM15 13h1v1h-1zM7 14h9v1h-9z"/></svg>
<svg class="i" style="left:151px;top:44px" width="18" height="17" viewBox="0 0 18 17" ><path fill="#808080" d="M5 0h5v1h-5zM1 1h13v1h-13zM0 2h8v1h-8zM9 2h5v1h-5zM0 3h4v1h-4zM10 3h4v1h-4zM0 4h14v1h-14zM0 5h14v1h-14zM0 6h7v1h-7zM8 6h6v1h-6zM0 7h7v1h-7zM8 7h1v1h-1zM13 7h2v1h-2zM0 8h7v1h-7zM8 8h1v1h-1zM10 8h2v1h-2zM13 8h1v1h-1zM15 8h1v1h-1zM0 9h7v1h-7zM8 9h1v1h-1zM13 9h4v1h-4zM0 10h7v1h-7zM8 10h1v1h-1zM10 10h4v1h-4zM15 10h1v1h-1zM0 11h7v1h-7zM8 11h1v1h-1zM15 11h1v1h-1zM1 12h6v1h-6zM8 12h1v1h-1zM10 12h4v1h-4zM15 12h1v1h-1zM8 13h1v1h-1zM15 13h1v1h-1zM8 14h8v1h-8z"/><path fill="#fff" d="M8 2h1v1h-1zM14 2h1v1h-1zM4 3h6v1h-6zM14 3h1v1h-1zM14 4h1v1h-1zM14 5h1v1h-1zM7 6h1v1h-1zM14 6h1v1h-1zM7 7h1v1h-1zM15 7h1v1h-1zM7 8h1v1h-1zM14 8h1v1h-1zM7 9h1v1h-1zM7 10h1v1h-1zM16 10h1v1h-1zM7 11h1v1h-1zM16 11h1v1h-1zM7 12h1v1h-1zM16 12h1v1h-1zM2 13h6v1h-6zM16 13h1v1h-1zM16 14h1v1h-1zM9 15h8v1h-8z"/><path fill="#c0c0c0" d="M9 7h4v1h-4zM9 8h1v1h-1zM12 8h1v1h-1zM9 9h4v1h-4zM9 10h1v1h-1zM14 10h1v1h-1zM9 11h6v1h-6zM9 12h1v1h-1zM14 12h1v1h-1zM9 13h6v1h-6z"/></svg>
<svg class="i" style="left:183px;top:47px" width="14" height="9" viewBox="0 0 14 9" ><path fill="#808080" d="M8 0h3v1h-3zM0 1h1v1h-1zM6 1h2v1h-2zM11 1h1v1h-1zM0 2h2v1h-2zM5 2h1v1h-1zM12 2h1v1h-1zM0 3h3v1h-3zM4 3h1v1h-1zM12 3h1v1h-1zM0 4h4v1h-4zM12 4h1v1h-1zM0 5h5v1h-5zM11 5h1v1h-1zM10 6h1v1h-1zM9 7h1v1h-1z"/><path fill="#fff" d="M9 1h2v1h-2zM7 2h2v1h-2zM6 3h1v1h-1zM13 3h1v1h-1zM5 4h1v1h-1zM13 4h1v1h-1zM13 5h1v1h-1zM1 6h5v1h-5zM12 6h1v1h-1zM11 7h1v1h-1zM10 8h1v1h-1z"/></svg>
<svg class="i" style="left:211px;top:44px" width="9" height="15" viewBox="0 0 9 15" ><path fill="#000" d="M0 0h1v1h-1zM0 1h2v1h-2zM0 2h3v1h-3zM0 3h4v1h-4zM0 4h5v1h-5zM0 5h6v1h-6zM0 6h7v1h-7zM0 7h8v1h-8zM0 8h5v1h-5zM0 9h2v1h-2zM3 9h2v1h-2zM0 10h1v1h-1zM3 10h3v1h-3zM4 11h2v1h-2zM4 12h3v1h-3zM5 13h2v1h-2z"/></svg>
<svg class="i" style="left:241px;top:43px" width="18" height="16" viewBox="0 0 18 16" ><path fill="#000" d="M6 0h1v1h-1zM5 1h1v1h-1zM7 1h1v1h-1zM5 2h1v1h-1zM8 2h1v1h-1zM4 3h1v1h-1zM9 3h1v1h-1zM4 4h1v1h-1zM10 4h1v1h-1zM3 5h1v1h-1zM11 5h1v1h-1zM3 6h1v1h-1zM6 6h1v1h-1zM12 6h1v1h-1zM2 7h1v1h-1zM6 7h1v1h-1zM13 7h1v1h-1zM2 8h1v1h-1zM14 8h1v1h-1zM1 9h1v1h-1zM5 9h1v1h-1zM7 9h1v1h-1zM15 9h1v1h-1zM1 10h1v1h-1zM14 10h2v1h-2zM0 11h1v1h-1zM14 11h2v1h-2zM0 12h1v1h-1zM13 12h3v1h-3zM1 13h14v1h-14zM2 14h12v1h-12z"/><path fill="#ffff00" d="M6 1h1v1h-1zM6 2h2v1h-2zM5 3h4v1h-4zM5 4h4v1h-4zM4 5h2v1h-2zM7 5h2v1h-2zM4 6h2v1h-2zM7 6h2v1h-2zM3 7h3v1h-3zM7 7h3v1h-3zM3 8h2v1h-2zM6 8h1v1h-1zM8 8h2v1h-2zM2 9h3v1h-3zM6 9h1v1h-1zM8 9h3v1h-3zM2 10h2v1h-2zM5 10h1v1h-1zM7 10h1v1h-1zM9 10h3v1h-3zM1 11h13v1h-13zM1 12h12v1h-12z"/><path fill="#c8c800" d="M9 4h1v1h-1zM9 5h2v1h-2zM9 6h3v1h-3zM10 7h3v1h-3zM10 8h4v1h-4zM11 9h4v1h-4zM12 10h2v1h-2z"/><path fill="#ff0000" d="M6 5h1v1h-1zM6 10h1v1h-1z"/><path fill="#0000ff" d="M5 8h1v1h-1zM7 8h1v1h-1zM4 10h1v1h-1zM8 10h1v1h-1z"/></svg>
<svg class="i" style="left:264px;top:43px" width="18" height="16" viewBox="0 0 18 16" ><path fill="#000" d="M0 0h10v1h-10zM0 1h1v1h-1zM9 1h2v1h-2zM0 2h1v1h-1zM9 2h1v1h-1zM11 2h1v1h-1zM0 3h1v1h-1zM9 3h4v1h-4zM0 4h1v1h-1zM12 4h1v1h-1zM0 5h1v1h-1zM6 5h5v1h-5zM12 5h1v1h-1zM0 6h1v1h-1zM6 6h1v1h-1zM9 6h5v1h-5zM0 7h1v1h-1zM6 7h1v1h-1zM8 7h2v1h-2zM12 7h3v1h-3zM0 8h1v1h-1zM6 8h3v1h-3zM13 8h3v1h-3zM0 9h1v1h-1zM7 9h2v1h-2zM14 9h3v1h-3zM0 10h1v1h-1zM8 10h2v1h-2zM12 10h2v1h-2zM16 10h1v1h-1zM0 11h1v1h-1zM9 11h4v1h-4zM15 11h2v1h-2zM0 12h1v1h-1zM10 12h2v1h-2zM15 12h1v1h-1zM0 13h15v1h-15zM11 14h3v1h-3z"/><path fill="#fff" d="M1 1h8v1h-8zM1 2h1v1h-1zM4 2h5v1h-5zM10 2h1v1h-1zM1 3h8v1h-8zM5 4h7v1h-7zM5 5h1v1h-1zM11 5h1v1h-1zM5 6h1v1h-1zM7 6h2v1h-2zM5 7h1v1h-1zM7 7h1v1h-1zM5 8h1v1h-1zM5 9h2v1h-2zM5 10h3v1h-3zM1 11h8v1h-8zM1 12h1v1h-1zM4 12h6v1h-6z"/><path fill="#c0c0c0" d="M2 2h2v1h-2zM2 12h2v1h-2z"/><path fill="#800080" d="M1 4h4v1h-4zM1 5h4v1h-4zM1 6h4v1h-4zM1 7h4v1h-4zM1 8h4v1h-4zM1 9h4v1h-4zM1 10h4v1h-4z"/><path fill="#ffff00" d="M10 7h2v1h-2zM9 8h4v1h-4zM9 9h5v1h-5zM10 10h2v1h-2zM14 10h2v1h-2zM13 11h2v1h-2zM12 12h3v1h-3z"/></svg>
<svg class="i" style="left:285px;top:43px" width="19" height="16" viewBox="0 0 19 16" ><path fill="#000" d="M3 0h11v1h-11zM2 1h1v1h-1zM14 1h2v1h-2zM2 2h1v1h-1zM7 2h7v1h-7zM3 3h4v1h-4zM2 4h1v1h-1zM4 4h2v1h-2zM2 5h1v1h-1zM4 5h2v1h-2zM8 5h7v1h-7zM2 6h1v1h-1zM4 6h4v1h-4zM15 6h1v1h-1zM2 7h1v1h-1zM4 7h1v1h-1zM6 7h1v1h-1zM15 7h1v1h-1zM2 8h1v1h-1zM4 8h1v1h-1zM6 8h1v1h-1zM8 8h1v1h-1zM10 8h1v1h-1zM15 8h2v1h-2zM2 9h3v1h-3zM6 9h1v1h-1zM16 9h1v1h-1zM1 10h2v1h-2zM8 10h1v1h-1zM10 10h1v1h-1zM16 10h2v1h-2zM0 11h2v1h-2zM14 11h2v1h-2zM0 12h1v1h-1zM12 12h3v1h-3zM0 13h4v1h-4zM5 13h1v1h-1zM7 13h1v1h-1zM9 13h4v1h-4zM0 14h13v1h-13z"/><path fill="#ffff00" d="M3 1h11v1h-11zM3 2h4v1h-4z"/><path fill="#fff" d="M3 4h1v1h-1zM3 5h1v1h-1zM3 6h1v1h-1zM13 6h2v1h-2zM3 7h1v1h-1zM13 7h2v1h-2zM3 8h1v1h-1zM13 8h2v1h-2zM13 9h3v1h-3zM13 10h3v1h-3zM12 11h2v1h-2zM4 12h1v1h-1zM6 12h1v1h-1zM8 12h1v1h-1zM4 13h1v1h-1zM6 13h1v1h-1zM8 13h1v1h-1z"/><path fill="#c0c0c0" d="M8 6h5v1h-5zM7 7h5v1h-5zM7 8h1v1h-1zM9 8h1v1h-1zM11 8h1v1h-1zM7 9h5v1h-5zM7 10h1v1h-1zM9 10h1v1h-1zM11 10h1v1h-1z"/><path fill="#808080" d="M12 7h1v1h-1zM12 8h1v1h-1zM12 9h1v1h-1zM3 10h4v1h-4zM12 10h1v1h-1zM3 11h9v1h-9zM2 12h2v1h-2zM5 12h1v1h-1zM7 12h1v1h-1zM9 12h3v1h-3z"/></svg>
<svg class="i" style="left:308px;top:45px" width="19" height="14" viewBox="0 0 19 14" ><path fill="#000" d="M5 0h8v1h-8zM4 1h1v1h-1zM13 1h1v1h-1zM3 2h1v1h-1zM13 2h1v1h-1zM3 3h1v1h-1zM13 3h1v1h-1zM3 4h1v1h-1zM13 4h2v1h-2zM3 5h1v1h-1zM13 5h1v1h-1zM15 5h1v1h-1zM3 6h1v1h-1zM13 6h1v1h-1zM16 6h1v1h-1zM3 7h1v1h-1zM13 7h1v1h-1zM16 7h1v1h-1zM1 8h3v1h-3zM16 8h2v1h-2zM0 9h2v1h-2zM14 9h2v1h-2zM0 10h1v1h-1zM12 10h3v1h-3zM0 11h4v1h-4zM5 11h1v1h-1zM7 11h1v1h-1zM9 11h4v1h-4zM0 12h13v1h-13z"/><path fill="#c0c0c0" d="M5 1h7v1h-7zM4 2h1v1h-1zM4 3h1v1h-1zM4 4h1v1h-1zM4 5h1v1h-1zM4 6h1v1h-1zM4 7h1v1h-1z"/><path fill="#fff" d="M12 1h1v1h-1zM5 2h6v1h-6zM12 2h1v1h-1zM5 3h6v1h-6zM12 3h1v1h-1zM5 4h1v1h-1zM8 4h2v1h-2zM12 4h1v1h-1zM5 5h1v1h-1zM7 5h1v1h-1zM9 5h1v1h-1zM12 5h1v1h-1zM14 5h1v1h-1zM7 6h1v1h-1zM12 6h1v1h-1zM14 6h2v1h-2zM5 7h6v1h-6zM12 7h1v1h-1zM14 7h2v1h-2zM12 8h4v1h-4zM12 9h2v1h-2zM4 10h1v1h-1zM6 10h1v1h-1zM8 10h1v1h-1zM4 11h1v1h-1zM6 11h1v1h-1zM8 11h1v1h-1z"/><path fill="#808080" d="M11 2h1v1h-1zM11 3h1v1h-1zM11 4h1v1h-1zM11 5h1v1h-1zM11 6h1v1h-1zM11 7h1v1h-1zM4 8h8v1h-8zM3 9h9v1h-9zM2 10h2v1h-2zM5 10h1v1h-1zM7 10h1v1h-1zM9 10h3v1h-3z"/><path fill="#0000ff" d="M6 4h2v1h-2zM10 4h1v1h-1zM6 5h1v1h-1zM8 5h1v1h-1zM10 5h1v1h-1zM5 6h2v1h-2zM8 6h3v1h-3z"/></svg>
<svg class="i" style="left:331px;top:43px" width="19" height="16" viewBox="0 0 19 16" ><path fill="#000" d="M6 0h6v1h-6zM5 1h1v1h-1zM12 1h1v1h-1zM2 2h1v1h-1zM4 2h1v1h-1zM13 2h1v1h-1zM15 2h1v1h-1zM2 3h1v1h-1zM4 3h1v1h-1zM8 3h1v1h-1zM13 3h1v1h-1zM15 3h1v1h-1zM2 4h3v1h-3zM8 4h1v1h-1zM13 4h3v1h-3zM2 5h1v1h-1zM4 5h1v1h-1zM8 5h3v1h-3zM13 5h1v1h-1zM15 5h1v1h-1zM2 6h1v1h-1zM4 6h1v1h-1zM13 6h1v1h-1zM15 6h1v1h-1zM2 7h1v1h-1zM5 7h1v1h-1zM12 7h1v1h-1zM15 7h1v1h-1zM2 8h1v1h-1zM6 8h1v1h-1zM11 8h1v1h-1zM15 8h2v1h-2zM2 9h1v1h-1zM7 9h4v1h-4zM16 9h1v1h-1zM1 10h2v1h-2zM16 10h2v1h-2zM0 11h2v1h-2zM14 11h2v1h-2zM0 12h1v1h-1zM12 12h3v1h-3zM0 13h4v1h-4zM5 13h1v1h-1zM7 13h1v1h-1zM9 13h4v1h-4zM0 14h13v1h-13z"/><path fill="#ff0000" d="M6 1h1v1h-1zM11 1h1v1h-1zM5 2h2v1h-2zM11 2h2v1h-2zM5 3h1v1h-1zM12 3h1v1h-1zM5 4h1v1h-1zM12 4h1v1h-1zM5 5h1v1h-1zM12 5h1v1h-1zM5 6h2v1h-2zM11 6h2v1h-2zM6 7h6v1h-6zM7 8h4v1h-4z"/><path fill="#ffff00" d="M7 1h4v1h-4z"/><path fill="#fff" d="M7 2h4v1h-4zM6 3h2v1h-2zM9 3h3v1h-3zM6 4h2v1h-2zM9 4h3v1h-3zM6 5h2v1h-2zM11 5h1v1h-1zM7 6h4v1h-4zM14 8h1v1h-1zM13 9h3v1h-3zM12 10h4v1h-4zM12 11h2v1h-2zM4 12h1v1h-1zM6 12h1v1h-1zM8 12h1v1h-1zM4 13h1v1h-1zM6 13h1v1h-1zM8 13h1v1h-1z"/><path fill="#c0c0c0" d="M3 9h4v1h-4zM11 9h2v1h-2z"/><path fill="#808080" d="M3 10h9v1h-9zM3 11h9v1h-9zM2 12h2v1h-2zM5 12h1v1h-1zM7 12h1v1h-1zM9 12h3v1h-3z"/></svg>
<svg class="i" style="left:354px;top:42px" width="19" height="17" viewBox="0 0 19 17" ><path fill="#0000ff" d="M11 0h1v1h-1zM13 0h1v1h-1zM15 0h1v1h-1zM10 1h1v1h-1zM12 1h1v1h-1zM14 1h1v1h-1zM10 2h1v1h-1zM12 2h1v1h-1zM14 2h1v1h-1zM10 3h1v1h-1zM12 3h1v1h-1zM14 3h1v1h-1zM10 4h1v1h-1zM12 4h1v1h-1zM14 4h1v1h-1zM10 5h1v1h-1zM12 5h1v1h-1zM5 6h1v1h-1zM7 6h1v1h-1zM9 6h1v1h-1zM4 7h1v1h-1zM6 7h1v1h-1zM8 7h1v1h-1zM10 7h1v1h-1zM4 8h1v1h-1zM6 8h1v1h-1zM8 8h1v1h-1zM10 8h1v1h-1zM4 9h1v1h-1zM6 9h1v1h-1zM8 9h1v1h-1zM4 10h1v1h-1zM6 10h1v1h-1zM8 10h1v1h-1zM4 11h1v1h-1zM6 11h1v1h-1zM8 11h1v1h-1z"/><path fill="#00ffff" d="M12 0h1v1h-1zM14 0h1v1h-1zM11 1h1v1h-1zM13 1h1v1h-1zM15 1h1v1h-1zM11 2h1v1h-1zM13 2h1v1h-1zM15 2h1v1h-1zM11 3h1v1h-1zM13 3h1v1h-1zM11 4h1v1h-1zM13 4h1v1h-1zM11 5h1v1h-1zM13 5h1v1h-1zM6 6h1v1h-1zM8 6h1v1h-1zM5 7h1v1h-1zM7 7h1v1h-1zM9 7h1v1h-1zM5 8h1v1h-1zM7 8h1v1h-1zM9 8h1v1h-1zM5 9h1v1h-1zM7 9h1v1h-1zM9 9h1v1h-1zM5 10h1v1h-1zM7 10h1v1h-1zM9 10h1v1h-1zM5 11h1v1h-1zM7 11h1v1h-1zM9 11h1v1h-1z"/><path fill="#ff0000" d="M16 0h2v1h-2zM16 1h1v1h-1zM16 2h1v1h-1zM15 3h2v1h-2zM15 4h1v1h-1zM9 5h1v1h-1zM14 5h2v1h-2zM10 6h4v1h-4zM11 7h1v1h-1zM11 8h1v1h-1zM10 9h1v1h-1zM10 10h1v1h-1zM10 11h1v1h-1z"/><path fill="#000" d="M14 6h1v1h-1zM12 7h1v1h-1zM15 7h1v1h-1zM16 8h1v1h-1zM16 9h1v1h-1zM3 10h1v1h-1zM16 10h1v1h-1zM1 11h2v1h-2zM16 11h2v1h-2zM0 12h2v1h-2zM14 12h2v1h-2zM0 13h1v1h-1zM12 13h3v1h-3zM0 14h4v1h-4zM5 14h1v1h-1zM7 14h1v1h-1zM9 14h4v1h-4zM0 15h13v1h-13z"/><path fill="#c0c0c0" d="M13 7h1v1h-1zM12 8h2v1h-2zM11 9h2v1h-2zM11 10h2v1h-2z"/><path fill="#fff" d="M14 7h1v1h-1zM14 8h2v1h-2zM13 9h3v1h-3zM13 10h3v1h-3zM12 11h4v1h-4zM12 12h2v1h-2zM4 13h1v1h-1zM6 13h1v1h-1zM8 13h1v1h-1zM4 14h1v1h-1zM6 14h1v1h-1zM8 14h1v1h-1z"/><path fill="#808080" d="M3 11h1v1h-1zM11 11h1v1h-1zM3 12h9v1h-9zM2 13h2v1h-2zM5 13h1v1h-1zM7 13h1v1h-1zM9 13h3v1h-3z"/></svg>
<svg class="i" style="left:384px;top:42px" width="18" height="18" viewBox="0 0 18 18" ><path fill="#000" d="M3 0h4v1h-4zM2 1h1v1h-1zM7 1h1v1h-1zM1 2h4v1h-4zM8 2h8v1h-8zM0 3h1v1h-1zM5 3h1v1h-1zM15 3h1v1h-1zM0 4h1v1h-1zM6 4h8v1h-8zM15 4h1v1h-1zM0 5h1v1h-1zM13 5h1v1h-1zM15 5h1v1h-1zM0 6h1v1h-1zM5 6h5v1h-5zM13 6h1v1h-1zM15 6h1v1h-1zM0 7h1v1h-1zM5 7h1v1h-1zM9 7h1v1h-1zM13 7h1v1h-1zM15 7h1v1h-1zM0 8h1v1h-1zM5 8h5v1h-5zM13 8h1v1h-1zM15 8h1v1h-1zM0 9h1v1h-1zM7 9h1v1h-1zM13 9h1v1h-1zM15 9h1v1h-1zM0 10h1v1h-1zM4 10h7v1h-7zM13 10h1v1h-1zM15 10h1v1h-1zM0 11h1v1h-1zM4 11h1v1h-1zM10 11h1v1h-1zM13 11h1v1h-1zM15 11h1v1h-1zM0 12h1v1h-1zM2 12h5v1h-5zM8 12h6v1h-6zM15 12h1v1h-1zM0 13h1v1h-1zM2 13h1v1h-1zM6 13h1v1h-1zM8 13h1v1h-1zM12 13h2v1h-2zM15 13h1v1h-1zM0 14h1v1h-1zM2 14h5v1h-5zM8 14h8v1h-8zM0 15h1v1h-1zM13 15h1v1h-1zM0 16h14v1h-14z"/><path fill="#ffff90" d="M3 1h4v1h-4zM5 2h3v1h-3zM6 3h9v1h-9zM14 4h1v1h-1zM14 5h1v1h-1zM14 6h1v1h-1zM14 7h1v1h-1zM14 8h1v1h-1zM14 9h1v1h-1zM14 10h1v1h-1zM14 11h1v1h-1zM14 12h1v1h-1zM14 13h1v1h-1z"/><path fill="#fff" d="M1 3h4v1h-4zM1 4h5v1h-5zM1 5h12v1h-12zM1 6h4v1h-4zM10 6h3v1h-3zM1 7h4v1h-4zM10 7h3v1h-3zM1 8h4v1h-4zM10 8h3v1h-3zM1 9h6v1h-6zM8 9h5v1h-5zM1 10h3v1h-3zM11 10h2v1h-2zM1 11h3v1h-3zM5 11h5v1h-5zM11 11h2v1h-2zM1 12h1v1h-1zM7 12h1v1h-1zM1 13h1v1h-1zM7 13h1v1h-1zM1 14h1v1h-1zM7 14h1v1h-1zM1 15h12v1h-12z"/><path fill="#ff0000" d="M6 7h3v1h-3z"/><path fill="#0000ff" d="M3 13h3v1h-3z"/><path fill="#00ff00" d="M9 13h3v1h-3z"/></svg>
<svg class="i" style="left:407px;top:43px" width="17" height="17" viewBox="0 0 17 17" ><path fill="#000" d="M0 0h12v1h-12zM0 1h1v1h-1zM11 1h2v1h-2zM0 2h1v1h-1zM11 2h1v1h-1zM13 2h1v1h-1zM0 3h1v1h-1zM11 3h4v1h-4zM0 4h1v1h-1zM14 4h1v1h-1zM0 5h1v1h-1zM5 5h5v1h-5zM14 5h1v1h-1zM0 6h1v1h-1zM5 6h1v1h-1zM9 6h1v1h-1zM14 6h1v1h-1zM0 7h1v1h-1zM5 7h5v1h-5zM14 7h1v1h-1zM0 8h1v1h-1zM7 8h1v1h-1zM14 8h1v1h-1zM0 9h1v1h-1zM4 9h7v1h-7zM14 9h1v1h-1zM0 10h1v1h-1zM4 10h1v1h-1zM10 10h1v1h-1zM14 10h1v1h-1zM0 11h1v1h-1zM2 11h5v1h-5zM8 11h5v1h-5zM14 11h1v1h-1zM0 12h1v1h-1zM2 12h1v1h-1zM6 12h1v1h-1zM8 12h1v1h-1zM12 12h1v1h-1zM14 12h1v1h-1zM0 13h1v1h-1zM2 13h5v1h-5zM8 13h5v1h-5zM14 13h1v1h-1zM0 14h1v1h-1zM14 14h1v1h-1zM0 15h15v1h-15z"/><path fill="#fff" d="M1 1h10v1h-10zM1 2h10v1h-10zM12 2h1v1h-1zM1 3h10v1h-10zM1 4h13v1h-13zM1 5h4v1h-4zM10 5h4v1h-4zM1 6h4v1h-4zM10 6h4v1h-4zM1 7h4v1h-4zM10 7h4v1h-4zM1 8h6v1h-6zM8 8h6v1h-6zM1 9h3v1h-3zM11 9h3v1h-3zM1 10h3v1h-3zM5 10h5v1h-5zM11 10h3v1h-3zM1 11h1v1h-1zM7 11h1v1h-1zM13 11h1v1h-1zM1 12h1v1h-1zM7 12h1v1h-1zM13 12h1v1h-1zM1 13h1v1h-1zM7 13h1v1h-1zM13 13h1v1h-1zM1 14h13v1h-13z"/><path fill="#ff0000" d="M6 6h3v1h-3z"/><path fill="#0000ff" d="M3 12h3v1h-3z"/><path fill="#008000" d="M9 12h3v1h-3z"/></svg>
<svg class="i" style="left:429px;top:42px" width="18" height="16" viewBox="0 0 18 16" ><path fill="#0000ff" d="M2 0h1v1h-1zM3 1h1v1h-1zM0 2h5v1h-5zM3 3h1v1h-1zM2 4h1v1h-1zM4 7h3v1h-3z"/><path fill="#000" d="M6 0h5v1h-5zM6 1h1v1h-1zM10 1h1v1h-1zM6 2h5v1h-5zM8 3h1v1h-1zM5 4h7v1h-7zM5 5h1v1h-1zM11 5h1v1h-1zM3 6h5v1h-5zM9 6h5v1h-5zM3 7h1v1h-1zM7 7h1v1h-1zM9 7h1v1h-1zM13 7h1v1h-1zM3 8h5v1h-5zM9 8h5v1h-5zM5 9h1v1h-1zM11 9h1v1h-1zM2 10h6v1h-6zM9 10h6v1h-6zM2 11h1v1h-1zM7 11h1v1h-1zM9 11h1v1h-1zM14 11h1v1h-1zM0 12h5v1h-5zM6 12h5v1h-5zM12 12h5v1h-5zM0 13h1v1h-1zM4 13h1v1h-1zM6 13h1v1h-1zM10 13h1v1h-1zM12 13h1v1h-1zM16 13h1v1h-1zM0 14h5v1h-5zM6 14h5v1h-5zM12 14h5v1h-5z"/><path fill="#ff0000" d="M7 1h3v1h-3zM7 13h3v1h-3z"/><path fill="#00ff00" d="M10 7h3v1h-3zM1 13h3v1h-3z"/><path fill="#ffff00" d="M13 13h3v1h-3z"/></svg>
<svg class="i" style="left:460px;top:41px" width="17" height="18" viewBox="0 0 17 18" ><path fill="#ff0000" d="M13 0h2v1h-2zM12 1h3v1h-3zM11 2h3v1h-3zM10 3h3v1h-3zM9 4h3v1h-3zM4 5h2v1h-2zM8 5h3v1h-3zM5 6h5v1h-5zM6 7h3v1h-3zM7 8h1v1h-1z"/><path fill="#000" d="M0 3h10v1h-10zM13 3h2v1h-2zM0 4h1v1h-1zM2 4h1v1h-1zM13 4h1v1h-1zM15 4h1v1h-1zM0 5h1v1h-1zM2 5h1v1h-1zM13 5h1v1h-1zM15 5h1v1h-1zM0 6h1v1h-1zM2 6h1v1h-1zM13 6h1v1h-1zM15 6h1v1h-1zM0 7h1v1h-1zM2 7h1v1h-1zM13 7h1v1h-1zM15 7h1v1h-1zM0 8h1v1h-1zM2 8h1v1h-1zM13 8h1v1h-1zM15 8h1v1h-1zM0 9h1v1h-1zM2 9h1v1h-1zM13 9h1v1h-1zM15 9h1v1h-1zM0 10h1v1h-1zM2 10h12v1h-12zM15 10h1v1h-1zM0 11h1v1h-1zM15 11h1v1h-1zM0 12h1v1h-1zM2 12h11v1h-11zM15 12h1v1h-1zM0 13h1v1h-1zM2 13h7v1h-7zM11 13h2v1h-2zM15 13h1v1h-1zM0 14h1v1h-1zM2 14h7v1h-7zM11 14h2v1h-2zM15 14h1v1h-1zM0 15h1v1h-1zM2 15h7v1h-7zM11 15h2v1h-2zM15 15h1v1h-1zM1 16h14v1h-14z"/><path fill="#808080" d="M1 4h1v1h-1zM14 4h1v1h-1zM1 5h1v1h-1zM14 5h1v1h-1zM1 6h1v1h-1zM14 6h1v1h-1zM1 7h1v1h-1zM14 7h1v1h-1zM1 8h1v1h-1zM14 8h1v1h-1zM1 9h1v1h-1zM14 9h1v1h-1zM1 10h1v1h-1zM14 10h1v1h-1zM1 11h14v1h-14zM1 12h1v1h-1zM13 12h2v1h-2zM1 13h1v1h-1zM13 13h2v1h-2zM1 14h1v1h-1zM13 14h2v1h-2zM1 15h1v1h-1zM13 15h2v1h-2z"/><path fill="#fff" d="M3 4h6v1h-6zM12 4h1v1h-1zM3 5h1v1h-1zM6 5h2v1h-2zM11 5h2v1h-2zM3 6h2v1h-2zM10 6h3v1h-3zM3 7h3v1h-3zM9 7h4v1h-4zM3 8h4v1h-4zM8 8h5v1h-5zM3 9h10v1h-10zM9 13h2v1h-2zM9 14h2v1h-2zM9 15h2v1h-2z"/></svg>
<svg class="i" style="left:483px;top:42px" width="16" height="17" viewBox="0 0 16 17" ><path fill="#000" d="M4 0h10v1h-10zM3 1h1v1h-1zM13 1h2v1h-2zM3 2h1v1h-1zM6 2h7v1h-7zM4 3h2v1h-2zM0 4h14v1h-14zM0 5h1v1h-1zM2 5h1v1h-1zM4 5h1v1h-1zM11 5h1v1h-1zM13 5h1v1h-1zM0 6h1v1h-1zM2 6h1v1h-1zM4 6h1v1h-1zM11 6h1v1h-1zM13 6h1v1h-1zM0 7h1v1h-1zM2 7h1v1h-1zM4 7h1v1h-1zM11 7h1v1h-1zM13 7h1v1h-1zM0 8h1v1h-1zM2 8h1v1h-1zM4 8h1v1h-1zM11 8h1v1h-1zM13 8h1v1h-1zM0 9h1v1h-1zM2 9h1v1h-1zM4 9h1v1h-1zM11 9h1v1h-1zM13 9h1v1h-1zM0 10h1v1h-1zM2 10h10v1h-10zM13 10h1v1h-1zM0 11h1v1h-1zM13 11h1v1h-1zM0 12h1v1h-1zM2 12h10v1h-10zM13 12h1v1h-1zM0 13h1v1h-1zM2 13h6v1h-6zM10 13h2v1h-2zM13 13h1v1h-1zM0 14h1v1h-1zM2 14h6v1h-6zM10 14h2v1h-2zM13 14h1v1h-1zM1 15h13v1h-13z"/><path fill="#ffff00" d="M4 1h9v1h-9zM4 2h2v1h-2z"/><path fill="#808080" d="M1 5h1v1h-1zM12 5h1v1h-1zM1 6h1v1h-1zM6 6h1v1h-1zM8 6h1v1h-1zM12 6h1v1h-1zM1 7h1v1h-1zM12 7h1v1h-1zM1 8h1v1h-1zM6 8h1v1h-1zM8 8h1v1h-1zM12 8h1v1h-1zM1 9h1v1h-1zM12 9h1v1h-1zM1 10h1v1h-1zM12 10h1v1h-1zM1 11h12v1h-12zM1 12h1v1h-1zM12 12h1v1h-1zM1 13h1v1h-1zM12 13h1v1h-1zM1 14h1v1h-1zM12 14h1v1h-1z"/><path fill="#fff" d="M3 5h1v1h-1zM3 6h1v1h-1zM3 7h1v1h-1zM3 8h1v1h-1zM3 9h1v1h-1zM8 13h2v1h-2zM8 14h2v1h-2z"/><path fill="#c0c0c0" d="M5 5h6v1h-6zM5 6h1v1h-1zM7 6h1v1h-1zM9 6h2v1h-2zM5 7h6v1h-6zM5 8h1v1h-1zM7 8h1v1h-1zM9 8h2v1h-2zM5 9h6v1h-6z"/></svg>
<svg class="i" style="left:506px;top:44px" width="15" height="15" viewBox="0 0 15 15" ><path fill="#000" d="M2 0h10v1h-10zM0 1h3v1h-3zM11 1h3v1h-3zM0 2h1v1h-1zM2 2h1v1h-1zM11 2h1v1h-1zM13 2h1v1h-1zM0 3h1v1h-1zM2 3h1v1h-1zM11 3h1v1h-1zM13 3h1v1h-1zM0 4h1v1h-1zM2 4h1v1h-1zM11 4h1v1h-1zM13 4h1v1h-1zM0 5h1v1h-1zM2 5h1v1h-1zM11 5h1v1h-1zM13 5h1v1h-1zM0 6h1v1h-1zM2 6h1v1h-1zM11 6h1v1h-1zM13 6h1v1h-1zM0 7h1v1h-1zM2 7h1v1h-1zM11 7h1v1h-1zM13 7h1v1h-1zM0 8h1v1h-1zM2 8h10v1h-10zM13 8h1v1h-1zM0 9h1v1h-1zM13 9h1v1h-1zM0 10h1v1h-1zM2 10h10v1h-10zM13 10h1v1h-1zM0 11h1v1h-1zM2 11h6v1h-6zM10 11h2v1h-2zM13 11h1v1h-1zM0 12h1v1h-1zM2 12h6v1h-6zM10 12h2v1h-2zM13 12h1v1h-1zM1 13h13v1h-13z"/><path fill="#c0c0c0" d="M3 1h8v1h-8zM3 2h1v1h-1zM10 2h1v1h-1zM3 3h1v1h-1zM10 3h1v1h-1zM3 4h1v1h-1zM10 4h1v1h-1zM10 5h1v1h-1zM3 6h1v1h-1zM10 6h1v1h-1zM3 7h8v1h-8z"/><path fill="#808080" d="M1 2h1v1h-1zM12 2h1v1h-1zM1 3h1v1h-1zM12 3h1v1h-1zM1 4h1v1h-1zM12 4h1v1h-1zM1 5h1v1h-1zM12 5h1v1h-1zM1 6h1v1h-1zM12 6h1v1h-1zM1 7h1v1h-1zM12 7h1v1h-1zM1 8h1v1h-1zM12 8h1v1h-1zM1 9h12v1h-12zM1 10h1v1h-1zM12 10h1v1h-1zM1 11h1v1h-1zM12 11h1v1h-1zM1 12h1v1h-1zM12 12h1v1h-1z"/><path fill="#fff" d="M4 2h6v1h-6zM7 3h2v1h-2zM5 4h1v1h-1zM7 4h2v1h-2zM5 5h1v1h-1zM4 6h6v1h-6zM8 11h2v1h-2zM8 12h2v1h-2z"/><path fill="#0000ff" d="M4 3h3v1h-3zM9 3h1v1h-1zM4 4h1v1h-1zM6 4h1v1h-1zM9 4h1v1h-1zM3 5h2v1h-2zM6 5h4v1h-4z"/></svg>
<svg class="i" style="left:536px;top:42px" width="14" height="10" viewBox="0 0 14 10" ><path fill="#e00000" d="M3 0h8v1h-8zM10 1h3v1h-3zM12 2h1v1h-1zM12 3h1v1h-1z"/><path fill="#000" d="M1 1h2v1h-2zM7 1h2v1h-2zM0 2h1v1h-1zM10 2h2v1h-2zM4 3h5v1h-5zM2 4h7v1h-7zM10 4h1v1h-1zM1 5h2v1h-2zM4 5h1v1h-1zM8 5h1v1h-1zM11 5h1v1h-1zM0 6h1v1h-1zM4 6h1v1h-1zM8 6h1v1h-1zM11 6h2v1h-2zM4 7h1v1h-1zM8 7h1v1h-1zM10 7h1v1h-1zM5 8h3v1h-3z"/><path fill="#fff" d="M3 5h1v1h-1zM9 5h2v1h-2zM1 6h3v1h-3zM9 6h2v1h-2z"/><path fill="#0000ff" d="M5 5h3v1h-3zM5 6h1v1h-1zM7 6h1v1h-1zM5 7h3v1h-3z"/><path fill="#80c0ff" d="M6 6h1v1h-1z"/><path fill="#c0c0c0" d="M1 7h2v1h-2z"/></svg>
<svg class="i" style="left:559px;top:42px" width="14" height="10" viewBox="0 0 14 10" ><path fill="#e00000" d="M3 0h8v1h-8zM10 1h3v1h-3zM12 2h1v1h-1zM12 3h1v1h-1z"/><path fill="#000" d="M1 1h2v1h-2zM7 1h2v1h-2zM0 2h1v1h-1zM10 2h2v1h-2zM4 3h5v1h-5zM2 4h7v1h-7zM10 4h1v1h-1zM1 5h2v1h-2zM4 5h1v1h-1zM8 5h1v1h-1zM11 5h1v1h-1zM0 6h1v1h-1zM4 6h1v1h-1zM8 6h1v1h-1zM11 6h2v1h-2zM4 7h1v1h-1zM8 7h1v1h-1zM10 7h1v1h-1zM5 8h3v1h-3z"/><path fill="#fff" d="M3 5h1v1h-1zM9 5h2v1h-2zM1 6h3v1h-3zM9 6h2v1h-2z"/><path fill="#0000ff" d="M5 5h3v1h-3zM5 6h1v1h-1zM7 6h1v1h-1zM5 7h3v1h-3z"/><path fill="#80c0ff" d="M6 6h1v1h-1z"/><path fill="#c0c0c0" d="M1 7h2v1h-2z"/></svg>
<svg class="i" style="left:582px;top:42px" width="14" height="10" viewBox="0 0 14 10" ><path fill="#e00000" d="M3 0h8v1h-8zM10 1h3v1h-3zM12 2h1v1h-1zM12 3h1v1h-1z"/><path fill="#000" d="M1 1h2v1h-2zM7 1h2v1h-2zM0 2h1v1h-1zM10 2h2v1h-2zM4 3h5v1h-5zM2 4h7v1h-7zM10 4h1v1h-1zM1 5h2v1h-2zM4 5h1v1h-1zM8 5h1v1h-1zM11 5h1v1h-1zM0 6h1v1h-1zM4 6h1v1h-1zM8 6h1v1h-1zM11 6h2v1h-2zM4 7h1v1h-1zM8 7h1v1h-1zM10 7h1v1h-1zM5 8h3v1h-3z"/><path fill="#fff" d="M3 5h1v1h-1zM9 5h2v1h-2zM1 6h3v1h-3zM9 6h2v1h-2z"/><path fill="#0000ff" d="M5 5h3v1h-3zM5 6h1v1h-1zM7 6h1v1h-1zM5 7h3v1h-3z"/><path fill="#80c0ff" d="M6 6h1v1h-1z"/><path fill="#c0c0c0" d="M1 7h2v1h-2z"/></svg>
<svg class="i" style="left:605px;top:42px" width="14" height="10" viewBox="0 0 14 10" ><path fill="#e00000" d="M3 0h8v1h-8zM10 1h3v1h-3zM12 2h1v1h-1zM12 3h1v1h-1z"/><path fill="#000" d="M1 1h2v1h-2zM7 1h2v1h-2zM0 2h1v1h-1zM10 2h2v1h-2zM4 3h5v1h-5zM2 4h7v1h-7zM10 4h1v1h-1zM1 5h2v1h-2zM4 5h1v1h-1zM8 5h1v1h-1zM11 5h1v1h-1zM0 6h1v1h-1zM4 6h1v1h-1zM8 6h1v1h-1zM11 6h2v1h-2zM4 7h1v1h-1zM8 7h1v1h-1zM10 7h1v1h-1zM5 8h3v1h-3z"/><path fill="#fff" d="M3 5h1v1h-1zM9 5h2v1h-2zM1 6h3v1h-3zM9 6h2v1h-2z"/><path fill="#0000ff" d="M5 5h3v1h-3zM5 6h1v1h-1zM7 6h1v1h-1zM5 7h3v1h-3z"/><path fill="#80c0ff" d="M6 6h1v1h-1z"/><path fill="#c0c0c0" d="M1 7h2v1h-2z"/></svg>
<svg class="i" style="left:562px;top:52px" width="6" height="7" viewBox="0 0 6 7" ><path fill="#ff0000" d="M2 0h1v1h-1zM3 1h1v1h-1zM0 2h5v1h-5zM0 3h5v1h-5zM3 4h1v1h-1zM2 5h1v1h-1z"/></svg>
<svg class="i" style="left:580px;top:53px" width="19" height="6" viewBox="0 0 19 6" ><path fill="#0000ff" d="M5 0h6v1h-6zM0 1h6v1h-6zM10 1h2v1h-2zM5 2h1v1h-1zM11 2h7v1h-7zM0 3h6v1h-6zM10 3h2v1h-2zM5 4h6v1h-6z"/><path fill="#fff" d="M6 1h4v1h-4zM6 2h5v1h-5zM6 3h4v1h-4z"/></svg>
<svg class="i" style="left:605px;top:53px" width="15" height="7" viewBox="0 0 15 7" ><path fill="#000" d="M3 0h8v1h-8zM0 1h2v1h-2zM3 1h1v1h-1zM10 1h1v1h-1zM12 1h2v1h-2zM3 2h1v1h-1zM10 2h1v1h-1zM0 3h2v1h-2zM3 3h1v1h-1zM10 3h1v1h-1zM12 3h2v1h-2zM3 4h1v1h-1zM10 4h1v1h-1zM3 5h8v1h-8z"/><path fill="#ff00ff" d="M4 1h6v1h-6zM4 2h6v1h-6zM4 3h6v1h-6zM4 4h6v1h-6z"/></svg>
<svg class="i" style="left:634px;top:44px" width="16" height="15" viewBox="0 0 16 15" ><path fill="#000" d="M0 0h5v1h-5zM6 0h5v1h-5zM0 1h1v1h-1zM4 1h1v1h-1zM6 1h1v1h-1zM10 1h1v1h-1zM0 2h1v1h-1zM4 2h1v1h-1zM6 2h1v1h-1zM10 2h1v1h-1zM0 3h1v1h-1zM4 3h1v1h-1zM6 3h1v1h-1zM10 3h1v1h-1zM0 4h5v1h-5zM6 4h5v1h-5zM0 6h5v1h-5zM6 6h5v1h-5zM0 7h1v1h-1zM4 7h1v1h-1zM6 7h1v1h-1zM10 7h1v1h-1zM0 8h1v1h-1zM4 8h1v1h-1zM6 8h1v1h-1zM10 8h1v1h-1zM0 9h1v1h-1zM4 9h1v1h-1zM6 9h1v1h-1zM10 9h1v1h-1zM0 10h5v1h-5zM6 10h5v1h-5z"/><path fill="#fff" d="M1 1h3v1h-3zM7 1h3v1h-3zM1 2h3v1h-3zM7 2h3v1h-3zM1 3h3v1h-3zM7 3h3v1h-3zM1 7h3v1h-3zM7 7h3v1h-3zM1 8h3v1h-3zM7 8h3v1h-3zM1 9h3v1h-3zM7 9h3v1h-3z"/><path fill="#ff0000" d="M12 4h1v1h-1zM11 5h1v1h-1zM12 8h2v1h-2zM6 12h1v1h-1zM9 12h1v1h-1zM12 12h1v1h-1zM5 13h1v1h-1zM9 13h1v1h-1zM13 13h1v1h-1z"/></svg>
<svg class="i" style="left:656px;top:43px" width="18" height="17" viewBox="0 0 18 17" ><path fill="#808080" d="M0 0h5v1h-5zM7 0h5v1h-5zM0 1h1v1h-1zM4 1h1v1h-1zM7 1h1v1h-1zM11 1h1v1h-1zM0 2h1v1h-1zM4 2h1v1h-1zM7 2h1v1h-1zM11 2h1v1h-1zM0 3h1v1h-1zM4 3h1v1h-1zM7 3h1v1h-1zM11 3h1v1h-1zM0 4h5v1h-5zM7 4h5v1h-5zM0 7h5v1h-5zM8 7h3v1h-3zM0 8h1v1h-1zM4 8h1v1h-1zM8 8h2v1h-2zM0 9h1v1h-1zM4 9h1v1h-1zM8 9h1v1h-1zM10 9h1v1h-1zM0 10h1v1h-1zM4 10h1v1h-1zM11 10h1v1h-1zM0 11h5v1h-5zM12 11h5v1h-5zM12 12h1v1h-1zM16 12h1v1h-1zM12 13h1v1h-1zM16 13h1v1h-1zM12 14h1v1h-1zM16 14h1v1h-1zM12 15h5v1h-5z"/><path fill="#fff" d="M1 1h3v1h-3zM5 1h1v1h-1zM8 1h3v1h-3zM12 1h1v1h-1zM1 2h1v1h-1zM5 2h1v1h-1zM8 2h1v1h-1zM12 2h1v1h-1zM1 3h1v1h-1zM5 3h1v1h-1zM8 3h1v1h-1zM12 3h1v1h-1zM5 4h1v1h-1zM12 4h1v1h-1zM1 5h5v1h-5zM8 5h5v1h-5zM1 8h3v1h-3zM5 8h1v1h-1zM10 8h2v1h-2zM1 9h1v1h-1zM5 9h1v1h-1zM9 9h1v1h-1zM1 10h1v1h-1zM5 10h1v1h-1zM9 10h1v1h-1zM5 11h1v1h-1zM1 12h5v1h-5zM13 12h3v1h-3zM17 12h1v1h-1zM13 13h1v1h-1zM17 13h1v1h-1zM13 14h1v1h-1zM17 14h1v1h-1zM17 15h1v1h-1zM13 16h5v1h-5z"/></svg>
<svg class="i" style="left:685px;top:43px" width="18" height="16" viewBox="0 0 18 16" ><path fill="#808080" d="M4 0h6v1h-6zM2 1h2v1h-2zM10 1h2v1h-2zM13 1h1v1h-1zM16 1h1v1h-1zM1 2h1v1h-1zM5 2h4v1h-4zM12 2h2v1h-2zM16 2h1v1h-1zM1 3h1v1h-1zM5 3h1v1h-1zM8 3h1v1h-1zM12 3h5v1h-5zM0 4h1v1h-1zM5 4h1v1h-1zM8 4h1v1h-1zM13 4h1v1h-1zM0 5h1v1h-1zM5 5h1v1h-1zM8 5h1v1h-1zM13 5h1v1h-1zM0 6h1v1h-1zM3 6h3v1h-3zM8 6h3v1h-3zM13 6h1v1h-1zM0 7h1v1h-1zM13 7h1v1h-1zM1 8h1v1h-1zM12 8h1v1h-1zM1 9h1v1h-1zM12 9h1v1h-1zM2 10h2v1h-2zM10 10h3v1h-3zM4 11h6v1h-6zM11 11h3v1h-3zM12 12h3v1h-3zM13 13h3v1h-3zM14 14h2v1h-2z"/><path fill="#fff" d="M5 1h5v1h-5zM3 2h2v1h-2zM11 2h1v1h-1zM14 2h1v1h-1zM17 2h1v1h-1zM2 3h1v1h-1zM6 3h2v1h-2zM9 3h1v1h-1zM17 3h1v1h-1zM2 4h1v1h-1zM6 4h1v1h-1zM9 4h1v1h-1zM14 4h4v1h-4zM1 5h1v1h-1zM6 5h1v1h-1zM9 5h1v1h-1zM14 5h1v1h-1zM1 6h1v1h-1zM6 6h1v1h-1zM14 6h1v1h-1zM1 7h1v1h-1zM4 7h3v1h-3zM9 7h3v1h-3zM14 7h1v1h-1zM14 8h1v1h-1zM2 9h1v1h-1zM13 9h1v1h-1zM13 10h1v1h-1zM3 11h1v1h-1zM5 12h6v1h-6zM16 14h1v1h-1zM15 15h2v1h-2z"/></svg>
<svg class="i" style="left:2px;top:3px" width="17" height="13" viewBox="0 0 17 13" ><path fill="#ff0000" d="M4 0h8v1h-8zM2 1h12v1h-12zM1 2h14v1h-14zM0 3h16v1h-16zM0 4h16v1h-16zM0 5h2v1h-2zM3 5h1v1h-1zM5 5h6v1h-6zM12 5h1v1h-1zM14 5h2v1h-2zM1 6h1v1h-1zM3 6h1v1h-1zM5 6h6v1h-6zM12 6h1v1h-1zM14 6h1v1h-1zM1 7h1v1h-1zM3 7h1v1h-1zM5 7h6v1h-6zM12 7h1v1h-1zM14 7h1v1h-1zM1 8h1v1h-1zM3 8h1v1h-1zM5 8h6v1h-6zM12 8h1v1h-1zM14 8h1v1h-1zM3 9h1v1h-1zM5 9h6v1h-6zM12 9h1v1h-1zM3 10h1v1h-1zM5 10h2v1h-2zM9 10h2v1h-2zM12 10h1v1h-1zM4 11h2v1h-2zM10 11h2v1h-2z"/><path fill="#ff9090" d="M2 5h1v1h-1zM4 5h1v1h-1zM11 5h1v1h-1zM13 5h1v1h-1zM2 6h1v1h-1zM4 6h1v1h-1zM11 6h1v1h-1zM13 6h1v1h-1zM2 7h1v1h-1zM4 7h1v1h-1zM11 7h1v1h-1zM13 7h1v1h-1zM2 8h1v1h-1zM4 8h1v1h-1zM11 8h1v1h-1zM13 8h1v1h-1zM2 9h1v1h-1zM4 9h1v1h-1zM11 9h1v1h-1zM13 9h1v1h-1zM4 10h1v1h-1zM11 10h1v1h-1z"/></svg>
<svg class="i" style="left:340px;top:582px" width="17" height="13" viewBox="0 0 17 13" ><path fill="#ff0000" d="M4 0h8v1h-8zM2 1h12v1h-12zM1 2h14v1h-14zM0 3h16v1h-16zM0 4h16v1h-16zM0 5h2v1h-2zM3 5h1v1h-1zM5 5h6v1h-6zM12 5h1v1h-1zM14 5h2v1h-2zM1 6h1v1h-1zM3 6h1v1h-1zM5 6h6v1h-6zM12 6h1v1h-1zM14 6h1v1h-1zM1 7h1v1h-1zM3 7h1v1h-1zM5 7h6v1h-6zM12 7h1v1h-1zM14 7h1v1h-1zM1 8h1v1h-1zM3 8h1v1h-1zM5 8h6v1h-6zM12 8h1v1h-1zM14 8h1v1h-1zM3 9h1v1h-1zM5 9h6v1h-6zM12 9h1v1h-1zM3 10h1v1h-1zM5 10h2v1h-2zM9 10h2v1h-2zM12 10h1v1h-1zM4 11h2v1h-2zM10 11h2v1h-2z"/><path fill="#ff9090" d="M2 5h1v1h-1zM4 5h1v1h-1zM11 5h1v1h-1zM13 5h1v1h-1zM2 6h1v1h-1zM4 6h1v1h-1zM11 6h1v1h-1zM13 6h1v1h-1zM2 7h1v1h-1zM4 7h1v1h-1zM11 7h1v1h-1zM13 7h1v1h-1zM2 8h1v1h-1zM4 8h1v1h-1zM11 8h1v1h-1zM13 8h1v1h-1zM2 9h1v1h-1zM4 9h1v1h-1zM11 9h1v1h-1zM13 9h1v1h-1zM4 10h1v1h-1zM11 10h1v1h-1z"/></svg>
<svg class="i" style="left:4px;top:20px" width="17" height="16" viewBox="0 0 17 16" ><path fill="#fff" d="M1 0h11v1h-11zM1 1h12v1h-12zM1 2h1v1h-1zM5 2h1v1h-1zM9 2h1v1h-1zM12 2h2v1h-2zM1 3h1v1h-1zM3 3h1v1h-1zM5 3h1v1h-1zM7 3h1v1h-1zM9 3h1v1h-1zM11 3h3v1h-3zM3 4h1v1h-1zM7 4h1v1h-1zM11 4h3v1h-3zM1 5h13v1h-13zM1 6h1v1h-1zM3 6h1v1h-1zM5 6h1v1h-1zM10 6h4v1h-4zM7 7h2v1h-2zM12 7h2v1h-2zM1 8h5v1h-5zM7 8h1v1h-1zM14 8h1v1h-1zM1 9h6v1h-6zM1 10h2v1h-2zM6 10h2v1h-2zM1 11h2v1h-2zM4 11h1v1h-1zM8 11h1v1h-1zM4 12h3v1h-3zM1 13h10v1h-10z"/><path fill="#000" d="M12 0h1v1h-1zM13 1h1v1h-1zM14 2h1v1h-1zM7 6h3v1h-3zM6 7h1v1h-1zM10 7h2v1h-2zM6 8h1v1h-1zM9 8h1v1h-1zM12 8h2v1h-2zM7 9h2v1h-2zM13 9h2v1h-2zM8 10h2v1h-2zM14 10h2v1h-2zM9 11h2v1h-2zM15 11h1v1h-1zM10 12h2v1h-2zM15 12h1v1h-1zM11 13h2v1h-2zM14 13h2v1h-2zM11 14h4v1h-4z"/><path fill="#ff0000" d="M2 2h3v1h-3zM6 2h3v1h-3zM10 2h2v1h-2zM2 3h1v1h-1zM4 3h1v1h-1zM6 3h1v1h-1zM8 3h1v1h-1zM10 3h1v1h-1zM0 4h3v1h-3zM4 4h3v1h-3zM8 4h3v1h-3zM0 6h1v1h-1zM2 6h1v1h-1zM4 6h1v1h-1zM6 6h1v1h-1zM0 7h6v1h-6zM3 10h3v1h-3zM3 11h1v1h-1zM5 11h3v1h-3zM0 12h4v1h-4zM7 12h3v1h-3z"/><path fill="#c0c0c0" d="M9 7h1v1h-1zM8 8h1v1h-1z"/><path fill="#ffff00" d="M10 8h2v1h-2zM9 9h4v1h-4zM10 10h4v1h-4zM11 11h3v1h-3zM12 12h1v1h-1z"/><path fill="#808000" d="M14 11h1v1h-1zM13 12h2v1h-2zM13 13h1v1h-1z"/></svg>
<svg class="i" style="left:12px;top:72px" width="10" height="16" viewBox="0 0 10 16" ><path fill="#000" d="M0 0h1v1h-1zM0 1h2v1h-2zM0 2h1v1h-1zM2 2h1v1h-1zM0 3h1v1h-1zM3 3h1v1h-1zM0 4h1v1h-1zM4 4h1v1h-1zM0 5h1v1h-1zM5 5h1v1h-1zM0 6h1v1h-1zM6 6h1v1h-1zM0 7h1v1h-1zM7 7h1v1h-1zM0 8h1v1h-1zM5 8h4v1h-4zM0 9h1v1h-1zM2 9h1v1h-1zM5 9h1v1h-1zM0 10h2v1h-2zM3 10h1v1h-1zM6 10h1v1h-1zM0 11h1v1h-1zM3 11h1v1h-1zM6 11h1v1h-1zM4 12h1v1h-1zM7 12h1v1h-1zM4 13h1v1h-1zM7 13h1v1h-1zM5 14h2v1h-2z"/><path fill="#fff" d="M1 2h1v1h-1zM1 3h2v1h-2zM1 4h3v1h-3zM1 5h4v1h-4zM1 6h5v1h-5zM1 7h6v1h-6zM1 8h4v1h-4zM1 9h1v1h-1zM3 9h2v1h-2zM4 10h2v1h-2zM4 11h2v1h-2zM5 12h2v1h-2zM5 13h2v1h-2z"/></svg>
<svg class="i" style="left:5px;top:114px" width="21" height="14" viewBox="0 0 21 14" ><path fill="#000" d="M0 0h8v1h-8zM12 0h8v1h-8zM8 1h1v1h-1zM11 1h1v1h-1zM8 2h1v1h-1zM11 2h1v1h-1zM9 3h2v1h-2zM4 4h1v1h-1zM9 4h2v1h-2zM15 4h1v1h-1zM3 5h2v1h-2zM9 5h2v1h-2zM15 5h2v1h-2zM2 6h16v1h-16zM3 7h2v1h-2zM9 7h2v1h-2zM15 7h2v1h-2zM4 8h1v1h-1zM9 8h2v1h-2zM15 8h1v1h-1zM9 9h2v1h-2zM8 10h1v1h-1zM11 10h1v1h-1zM8 11h1v1h-1zM11 11h1v1h-1zM0 12h8v1h-8zM12 12h8v1h-8z"/></svg>
<svg class="i" style="left:7px;top:203px" width="17" height="16" viewBox="0 0 17 16" ><path fill="#000" d="M4 0h5v1h-5zM2 1h2v1h-2zM9 1h2v1h-2zM1 2h1v1h-1zM11 2h1v1h-1zM1 3h1v1h-1zM5 3h2v1h-2zM11 3h1v1h-1zM0 4h1v1h-1zM5 4h2v1h-2zM12 4h1v1h-1zM0 5h1v1h-1zM3 5h6v1h-6zM12 5h1v1h-1zM0 6h1v1h-1zM3 6h6v1h-6zM12 6h1v1h-1zM0 7h1v1h-1zM5 7h2v1h-2zM12 7h1v1h-1zM1 8h1v1h-1zM5 8h2v1h-2zM11 8h1v1h-1zM1 9h1v1h-1zM11 9h1v1h-1zM2 10h2v1h-2zM9 10h3v1h-3zM4 11h5v1h-5zM10 11h3v1h-3zM11 12h3v1h-3zM12 13h3v1h-3zM13 14h2v1h-2z"/><path fill="#fff" d="M4 1h5v1h-5zM2 2h9v1h-9zM2 3h3v1h-3zM7 3h4v1h-4zM1 4h4v1h-4zM7 4h5v1h-5zM1 5h2v1h-2zM9 5h3v1h-3zM1 6h2v1h-2zM9 6h3v1h-3zM1 7h4v1h-4zM7 7h5v1h-5zM2 8h3v1h-3zM7 8h4v1h-4zM2 9h9v1h-9zM4 10h5v1h-5z"/></svg>
<svg class="i" style="left:7px;top:224px" width="17" height="16" viewBox="0 0 17 16" ><path fill="#000" d="M4 0h5v1h-5zM2 1h2v1h-2zM9 1h2v1h-2zM1 2h1v1h-1zM11 2h1v1h-1zM1 3h1v1h-1zM11 3h1v1h-1zM0 4h1v1h-1zM12 4h1v1h-1zM0 5h1v1h-1zM3 5h6v1h-6zM12 5h1v1h-1zM0 6h1v1h-1zM3 6h6v1h-6zM12 6h1v1h-1zM0 7h1v1h-1zM12 7h1v1h-1zM1 8h1v1h-1zM11 8h1v1h-1zM1 9h1v1h-1zM11 9h1v1h-1zM2 10h2v1h-2zM9 10h3v1h-3zM4 11h5v1h-5zM10 11h3v1h-3zM11 12h3v1h-3zM12 13h3v1h-3zM13 14h2v1h-2z"/><path fill="#fff" d="M4 1h5v1h-5zM2 2h9v1h-9zM2 3h9v1h-9zM1 4h11v1h-11zM1 5h2v1h-2zM9 5h3v1h-3zM1 6h2v1h-2zM9 6h3v1h-3zM1 7h11v1h-11zM2 8h9v1h-9zM2 9h9v1h-9zM4 10h5v1h-5z"/></svg>
<svg class="i" style="left:6px;top:245px" width="18" height="16" viewBox="0 0 18 16" ><path fill="#ff0000" d="M0 0h3v1h-3zM14 0h3v1h-3zM0 1h2v1h-2zM15 1h2v1h-2zM0 2h1v1h-1zM2 2h1v1h-1zM14 2h1v1h-1zM16 2h1v1h-1zM3 3h1v1h-1zM13 3h1v1h-1zM3 11h1v1h-1zM13 11h1v1h-1zM0 12h1v1h-1zM2 12h1v1h-1zM14 12h1v1h-1zM16 12h1v1h-1zM0 13h2v1h-2zM15 13h2v1h-2zM0 14h3v1h-3zM14 14h3v1h-3z"/><path fill="#000" d="M4 2h7v1h-7zM4 3h1v1h-1zM10 3h2v1h-2zM4 4h1v1h-1zM6 4h3v1h-3zM10 4h1v1h-1zM12 4h1v1h-1zM4 5h1v1h-1zM10 5h3v1h-3zM4 6h1v1h-1zM6 6h5v1h-5zM12 6h1v1h-1zM4 7h1v1h-1zM12 7h1v1h-1zM4 8h1v1h-1zM6 8h5v1h-5zM12 8h1v1h-1zM4 9h1v1h-1zM12 9h1v1h-1zM4 10h1v1h-1zM12 10h1v1h-1zM4 11h9v1h-9z"/><path fill="#fff" d="M5 3h5v1h-5zM5 4h1v1h-1zM9 4h1v1h-1zM11 4h1v1h-1zM5 5h5v1h-5zM5 6h1v1h-1zM11 6h1v1h-1zM5 7h7v1h-7zM5 8h1v1h-1zM11 8h1v1h-1zM5 9h7v1h-7zM5 10h7v1h-7z"/></svg>
<svg class="i" style="left:6px;top:282px" width="19" height="6" viewBox="0 0 19 6" ><path fill="#808080" d="M0 0h4v1h-4zM14 0h4v1h-4zM3 1h1v1h-1zM14 1h1v1h-1zM3 2h1v1h-1zM14 2h1v1h-1zM3 3h1v1h-1zM14 3h1v1h-1zM3 4h12v1h-12z"/><path fill="#fff" d="M1 1h2v1h-2zM4 1h1v1h-1zM15 1h4v1h-4zM4 2h1v1h-1zM15 2h1v1h-1zM4 3h1v1h-1zM15 3h1v1h-1zM15 4h1v1h-1zM4 5h12v1h-12z"/></svg>
<svg class="i" style="left:6px;top:303px" width="19" height="6" viewBox="0 0 19 6" ><path fill="#808080" d="M3 0h12v1h-12zM3 1h1v1h-1zM14 1h1v1h-1zM3 2h1v1h-1zM14 2h1v1h-1zM3 3h1v1h-1zM14 3h1v1h-1zM0 4h4v1h-4zM14 4h4v1h-4z"/><path fill="#fff" d="M4 1h10v1h-10zM15 1h1v1h-1zM4 2h1v1h-1zM15 2h1v1h-1zM4 3h1v1h-1zM15 3h1v1h-1zM4 4h1v1h-1zM1 5h4v1h-4zM15 5h4v1h-4z"/></svg>
<svg class="i" style="left:5px;top:323px" width="21" height="6" viewBox="0 0 21 6" ><path fill="#808080" d="M2 0h1v1h-1zM7 0h1v1h-1zM12 0h1v1h-1zM17 0h1v1h-1zM1 1h1v1h-1zM3 1h1v1h-1zM6 1h1v1h-1zM8 1h1v1h-1zM11 1h1v1h-1zM13 1h1v1h-1zM16 1h1v1h-1zM18 1h1v1h-1zM0 2h1v1h-1zM4 2h2v1h-2zM9 2h2v1h-2zM14 2h2v1h-2zM19 2h1v1h-1zM1 3h1v1h-1zM3 3h1v1h-1zM6 3h1v1h-1zM8 3h1v1h-1zM11 3h1v1h-1zM13 3h1v1h-1zM16 3h1v1h-1zM18 3h1v1h-1zM2 4h1v1h-1zM7 4h1v1h-1zM12 4h1v1h-1zM17 4h1v1h-1z"/><path fill="#fff" d="M2 2h1v1h-1zM7 2h1v1h-1zM12 2h1v1h-1zM17 2h1v1h-1zM5 3h1v1h-1zM10 3h1v1h-1zM15 3h1v1h-1zM20 3h1v1h-1zM4 4h1v1h-1zM9 4h1v1h-1zM14 4h1v1h-1zM19 4h1v1h-1zM3 5h1v1h-1zM8 5h1v1h-1zM13 5h1v1h-1zM18 5h1v1h-1z"/></svg>
<svg class="i" style="left:5px;top:345px" width="19" height="4" viewBox="0 0 19 4" ><path fill="#808080" d="M0 0h18v1h-18zM0 1h18v1h-18zM0 2h18v1h-18z"/><path fill="#fff" d="M18 1h1v1h-1zM18 2h1v1h-1zM1 3h18v1h-18z"/></svg>
<svg class="i" style="left:5px;top:364px" width="20" height="8" viewBox="0 0 20 8" ><path fill="#808080" d="M3 0h5v1h-5zM12 0h5v1h-5zM3 1h1v1h-1zM7 1h1v1h-1zM12 1h1v1h-1zM16 1h1v1h-1zM0 2h4v1h-4zM7 2h6v1h-6zM16 2h3v1h-3zM0 4h4v1h-4zM7 4h6v1h-6zM16 4h3v1h-3zM3 5h1v1h-1zM7 5h1v1h-1zM12 5h1v1h-1zM16 5h1v1h-1zM3 6h5v1h-5zM12 6h5v1h-5z"/><path fill="#fff" d="M4 1h3v1h-3zM8 1h1v1h-1zM13 1h3v1h-3zM17 1h1v1h-1zM4 2h1v1h-1zM13 2h1v1h-1zM1 3h4v1h-4zM8 3h6v1h-6zM17 3h3v1h-3zM1 5h2v1h-2zM4 5h1v1h-1zM8 5h4v1h-4zM13 5h1v1h-1zM17 5h3v1h-3zM8 6h1v1h-1zM17 6h1v1h-1zM4 7h5v1h-5zM13 7h5v1h-5z"/></svg>
<svg class="i" style="left:5px;top:379px" width="20" height="13" viewBox="0 0 20 13" ><path fill="#808080" d="M0 0h3v1h-3zM8 0h11v1h-11zM3 1h1v1h-1zM7 1h1v1h-1zM3 2h1v1h-1zM7 2h1v1h-1zM4 3h1v1h-1zM6 3h1v1h-1zM4 4h1v1h-1zM6 4h1v1h-1zM5 5h1v1h-1zM5 6h1v1h-1zM4 7h1v1h-1zM6 7h1v1h-1zM4 8h1v1h-1zM6 8h1v1h-1zM3 9h1v1h-1zM7 9h1v1h-1zM3 10h1v1h-1zM7 10h1v1h-1zM0 11h3v1h-3zM8 11h11v1h-11z"/><path fill="#fff" d="M1 1h2v1h-2zM9 1h11v1h-11zM4 2h1v1h-1zM8 2h1v1h-1zM8 3h1v1h-1zM5 4h1v1h-1zM7 4h1v1h-1zM7 5h1v1h-1zM6 6h1v1h-1zM5 8h1v1h-1zM7 8h1v1h-1zM5 9h1v1h-1zM4 10h1v1h-1zM8 10h1v1h-1zM4 11h1v1h-1zM1 12h3v1h-3zM9 12h11v1h-11z"/></svg>
<svg class="i" style="left:5px;top:400px" width="20" height="13" viewBox="0 0 20 13" ><path fill="#808080" d="M0 0h3v1h-3zM8 0h11v1h-11zM3 1h1v1h-1zM7 1h1v1h-1zM3 2h1v1h-1zM7 2h1v1h-1zM4 3h1v1h-1zM6 3h1v1h-1zM4 4h1v1h-1zM6 4h1v1h-1zM5 5h1v1h-1zM5 6h1v1h-1zM4 7h1v1h-1zM6 7h1v1h-1zM4 8h1v1h-1zM6 8h1v1h-1zM3 9h1v1h-1zM7 9h1v1h-1zM3 10h1v1h-1zM7 10h1v1h-1zM0 11h3v1h-3zM8 11h11v1h-11z"/><path fill="#fff" d="M1 1h2v1h-2zM9 1h11v1h-11zM4 2h1v1h-1zM8 2h1v1h-1zM8 3h1v1h-1zM5 4h1v1h-1zM7 4h1v1h-1zM7 5h1v1h-1zM6 6h1v1h-1zM5 8h1v1h-1zM7 8h1v1h-1zM5 9h1v1h-1zM4 10h1v1h-1zM8 10h1v1h-1zM4 11h1v1h-1zM1 12h3v1h-3zM9 12h11v1h-11z"/></svg>
<svg class="i" style="left:5px;top:421px" width="20" height="13" viewBox="0 0 20 13" ><path fill="#808080" d="M0 0h3v1h-3zM8 0h11v1h-11zM3 1h1v1h-1zM7 1h1v1h-1zM3 2h1v1h-1zM7 2h1v1h-1zM4 3h1v1h-1zM6 3h1v1h-1zM4 4h1v1h-1zM6 4h1v1h-1zM5 5h1v1h-1zM5 6h1v1h-1zM4 7h1v1h-1zM6 7h1v1h-1zM4 8h1v1h-1zM6 8h1v1h-1zM3 9h1v1h-1zM7 9h1v1h-1zM3 10h1v1h-1zM7 10h1v1h-1zM0 11h3v1h-3zM8 11h11v1h-11z"/><path fill="#fff" d="M1 1h2v1h-2zM9 1h11v1h-11zM4 2h1v1h-1zM8 2h1v1h-1zM8 3h1v1h-1zM5 4h1v1h-1zM7 4h1v1h-1zM7 5h1v1h-1zM6 6h1v1h-1zM5 8h1v1h-1zM7 8h1v1h-1zM5 9h1v1h-1zM4 10h1v1h-1zM8 10h1v1h-1zM4 11h1v1h-1zM1 12h3v1h-3zM9 12h11v1h-11z"/></svg>
<svg class="i" style="left:5px;top:442px" width="20" height="13" viewBox="0 0 20 13" ><path fill="#808080" d="M0 0h3v1h-3zM8 0h11v1h-11zM3 1h1v1h-1zM7 1h1v1h-1zM3 2h1v1h-1zM7 2h1v1h-1zM4 3h1v1h-1zM6 3h1v1h-1zM4 4h1v1h-1zM6 4h1v1h-1zM5 5h1v1h-1zM5 6h1v1h-1zM4 7h1v1h-1zM6 7h1v1h-1zM4 8h1v1h-1zM6 8h1v1h-1zM3 9h1v1h-1zM7 9h1v1h-1zM3 10h1v1h-1zM7 10h1v1h-1zM0 11h3v1h-3zM8 11h11v1h-11z"/><path fill="#fff" d="M1 1h2v1h-2zM9 1h11v1h-11zM4 2h1v1h-1zM8 2h1v1h-1zM8 3h1v1h-1zM5 4h1v1h-1zM7 4h1v1h-1zM7 5h1v1h-1zM6 6h1v1h-1zM5 8h1v1h-1zM7 8h1v1h-1zM5 9h1v1h-1zM4 10h1v1h-1zM8 10h1v1h-1zM4 11h1v1h-1zM1 12h3v1h-3zM9 12h11v1h-11z"/></svg>
<svg class="i" style="left:15px;top:381px" width="9" height="9" viewBox="0 0 9 9" ><path fill="#808080" d="M2 0h4v1h-4zM1 1h6v1h-6zM0 2h3v1h-3zM5 2h3v1h-3zM0 3h2v1h-2zM6 3h2v1h-2zM0 4h2v1h-2zM6 4h2v1h-2zM0 5h2v1h-2zM6 5h2v1h-2zM1 6h6v1h-6zM2 7h4v1h-4z"/><path fill="#fff" d="M3 2h1v1h-1zM3 3h1v1h-1zM8 3h1v1h-1zM3 4h1v1h-1zM8 4h1v1h-1zM8 5h1v1h-1zM7 6h2v1h-2zM6 7h2v1h-2zM3 8h4v1h-4z"/><path fill="#c0c0c0" d="M4 2h1v1h-1zM2 3h1v1h-1zM4 3h2v1h-2zM2 4h1v1h-1zM5 4h1v1h-1zM2 5h4v1h-4z"/></svg>
<svg class="i" style="left:32px;top:137px" width="27" height="12" viewBox="0 0 27 12" ><path fill="#c0c0c0" d="M1 0h12v1h-12zM0 1h14v1h-14zM13 2h1v1h-1zM14 3h1v1h-1zM15 4h1v1h-1z"/><path fill="#e0e0e0" d="M0 2h13v1h-13z"/><path fill="#808080" d="M14 2h1v1h-1zM0 3h14v1h-14zM15 3h1v1h-1zM0 4h5v1h-5zM6 4h9v1h-9zM16 4h1v1h-1zM0 5h5v1h-5zM6 5h11v1h-11zM0 6h5v1h-5zM6 6h10v1h-10zM0 7h5v1h-5zM6 7h9v1h-9zM0 8h5v1h-5zM6 8h8v1h-8zM0 9h13v1h-13z"/><path fill="#fff" d="M5 4h1v1h-1zM5 5h1v1h-1zM5 6h1v1h-1zM5 7h1v1h-1zM5 8h1v1h-1z"/><path fill="#ff0000" d="M17 4h9v1h-9zM17 5h9v1h-9z"/><path fill="#000" d="M16 6h1v1h-1zM15 7h1v1h-1zM14 8h1v1h-1zM13 9h1v1h-1zM0 10h13v1h-13z"/><path fill="#800000" d="M17 6h9v1h-9z"/></svg>
<svg class="i" style="left:32px;top:161px" width="27" height="12" viewBox="0 0 27 12" ><path fill="#c0c0c0" d="M1 0h12v1h-12zM0 1h14v1h-14zM13 2h1v1h-1zM14 3h1v1h-1zM15 4h1v1h-1z"/><path fill="#e0e0e0" d="M0 2h13v1h-13z"/><path fill="#808080" d="M14 2h1v1h-1zM0 3h14v1h-14zM15 3h1v1h-1zM0 4h5v1h-5zM6 4h9v1h-9zM16 4h1v1h-1zM0 5h5v1h-5zM6 5h11v1h-11zM0 6h5v1h-5zM6 6h10v1h-10zM0 7h5v1h-5zM6 7h9v1h-9zM0 8h5v1h-5zM6 8h8v1h-8zM0 9h13v1h-13z"/><path fill="#fff" d="M5 4h1v1h-1zM5 5h1v1h-1zM5 6h1v1h-1zM5 7h1v1h-1zM5 8h1v1h-1z"/><path fill="#ff0000" d="M17 4h9v1h-9zM17 5h9v1h-9z"/><path fill="#000" d="M16 6h1v1h-1zM15 7h1v1h-1zM14 8h1v1h-1zM13 9h1v1h-1zM0 10h13v1h-13z"/><path fill="#800000" d="M17 6h9v1h-9z"/></svg>
<svg class="i" style="left:32px;top:185px" width="27" height="12" viewBox="0 0 27 12" ><path fill="#c0c0c0" d="M1 0h12v1h-12zM0 1h14v1h-14zM13 2h1v1h-1zM14 3h1v1h-1zM15 4h1v1h-1z"/><path fill="#e0e0e0" d="M0 2h13v1h-13z"/><path fill="#808080" d="M14 2h1v1h-1zM0 3h14v1h-14zM15 3h1v1h-1zM0 4h5v1h-5zM6 4h9v1h-9zM16 4h1v1h-1zM0 5h5v1h-5zM6 5h11v1h-11zM0 6h5v1h-5zM6 6h10v1h-10zM0 7h5v1h-5zM6 7h9v1h-9zM0 8h5v1h-5zM6 8h8v1h-8zM0 9h13v1h-13z"/><path fill="#fff" d="M5 4h1v1h-1zM5 5h1v1h-1zM5 6h1v1h-1zM5 7h1v1h-1zM5 8h1v1h-1z"/><path fill="#ff0000" d="M17 4h9v1h-9zM17 5h9v1h-9z"/><path fill="#000" d="M16 6h1v1h-1zM15 7h1v1h-1zM14 8h1v1h-1zM13 9h1v1h-1zM0 10h13v1h-13z"/><path fill="#800000" d="M17 6h9v1h-9z"/></svg>
<svg class="i" style="left:32px;top:209px" width="27" height="12" viewBox="0 0 27 12" ><path fill="#c0c0c0" d="M1 0h12v1h-12zM0 1h14v1h-14zM13 2h1v1h-1zM14 3h1v1h-1zM15 4h1v1h-1z"/><path fill="#e0e0e0" d="M0 2h13v1h-13z"/><path fill="#808080" d="M14 2h1v1h-1zM0 3h14v1h-14zM15 3h1v1h-1zM0 4h5v1h-5zM6 4h9v1h-9zM16 4h1v1h-1zM0 5h5v1h-5zM6 5h11v1h-11zM0 6h5v1h-5zM6 6h10v1h-10zM0 7h5v1h-5zM6 7h9v1h-9zM0 8h5v1h-5zM6 8h8v1h-8zM0 9h13v1h-13z"/><path fill="#fff" d="M5 4h1v1h-1zM5 5h1v1h-1zM5 6h1v1h-1zM5 7h1v1h-1zM5 8h1v1h-1z"/><path fill="#ff0000" d="M17 4h9v1h-9zM17 5h9v1h-9z"/><path fill="#000" d="M16 6h1v1h-1zM15 7h1v1h-1zM14 8h1v1h-1zM13 9h1v1h-1zM0 10h13v1h-13z"/><path fill="#800000" d="M17 6h9v1h-9z"/></svg>
<svg class="i" style="left:32px;top:233px" width="27" height="12" viewBox="0 0 27 12" ><path fill="#c0c0c0" d="M1 0h12v1h-12zM0 1h14v1h-14zM13 2h1v1h-1zM14 3h1v1h-1zM15 4h1v1h-1z"/><path fill="#e0e0e0" d="M0 2h13v1h-13z"/><path fill="#808080" d="M14 2h1v1h-1zM0 3h14v1h-14zM15 3h1v1h-1zM0 4h5v1h-5zM6 4h9v1h-9zM16 4h1v1h-1zM0 5h5v1h-5zM6 5h11v1h-11zM0 6h5v1h-5zM6 6h10v1h-10zM0 7h5v1h-5zM6 7h9v1h-9zM0 8h5v1h-5zM6 8h8v1h-8zM0 9h13v1h-13z"/><path fill="#fff" d="M5 4h1v1h-1zM5 5h1v1h-1zM5 6h1v1h-1zM5 7h1v1h-1zM5 8h1v1h-1z"/><path fill="#ff0000" d="M17 4h9v1h-9zM17 5h9v1h-9z"/><path fill="#000" d="M16 6h1v1h-1zM15 7h1v1h-1zM14 8h1v1h-1zM13 9h1v1h-1zM0 10h13v1h-13z"/><path fill="#800000" d="M17 6h9v1h-9z"/></svg>
<svg class="i" style="left:31px;top:256px" width="27" height="13" viewBox="0 0 27 13" ><path fill="#ff0000" d="M3 0h7v1h-7zM2 2h6v1h-6zM1 4h6v1h-6zM0 6h7v1h-7zM0 7h7v1h-7z"/><path fill="#808080" d="M10 0h13v1h-13zM22 1h1v1h-1zM8 2h14v1h-14zM23 2h1v1h-1zM22 3h1v1h-1zM24 3h1v1h-1zM7 4h15v1h-15zM23 4h1v1h-1zM25 4h1v1h-1zM7 5h4v1h-4zM13 5h10v1h-10zM24 5h1v1h-1zM7 6h3v1h-3zM11 6h2v1h-2zM14 6h10v1h-10zM7 7h3v1h-3zM11 7h2v1h-2zM14 7h9v1h-9zM7 8h3v1h-3zM11 8h2v1h-2zM14 8h8v1h-8zM7 9h4v1h-4zM13 9h8v1h-8zM7 10h13v1h-13z"/><path fill="#fff" d="M21 3h1v1h-1zM22 4h1v1h-1zM11 5h2v1h-2zM23 5h1v1h-1zM10 6h1v1h-1zM13 6h1v1h-1zM10 7h1v1h-1zM13 7h1v1h-1zM10 8h1v1h-1zM13 8h1v1h-1zM11 9h2v1h-2z"/><path fill="#000" d="M25 5h1v1h-1zM24 6h1v1h-1zM23 7h1v1h-1zM22 8h1v1h-1zM21 9h1v1h-1zM20 10h1v1h-1zM7 11h13v1h-13z"/><path fill="#800000" d="M0 8h7v1h-7z"/></svg>
<svg class="i" style="left:6px;top:580px" width="17" height="14" viewBox="0 0 17 14" ><path fill="#000" d="M7 0h3v1h-3zM11 0h2v1h-2zM0 1h1v1h-1zM2 1h1v1h-1zM4 1h1v1h-1zM6 1h1v1h-1zM9 1h2v1h-2zM13 1h1v1h-1zM5 2h1v1h-1zM9 2h1v1h-1zM13 2h1v1h-1zM0 3h1v1h-1zM2 3h4v1h-4zM9 3h1v1h-1zM13 3h1v1h-1zM5 4h1v1h-1zM8 4h3v1h-3zM13 4h1v1h-1zM5 5h9v1h-9zM5 6h1v1h-1zM8 6h2v1h-2zM12 6h2v1h-2zM5 7h1v1h-1zM9 7h2v1h-2zM13 7h1v1h-1zM5 8h1v1h-1zM9 8h2v1h-2zM13 8h1v1h-1zM5 9h1v1h-1zM8 9h3v1h-3zM13 9h1v1h-1zM0 10h1v1h-1zM2 10h4v1h-4zM7 10h5v1h-5zM13 10h1v1h-1zM5 11h2v1h-2zM8 11h2v1h-2zM11 11h3v1h-3zM0 12h1v1h-1zM2 12h1v1h-1zM4 12h2v1h-2zM11 12h2v1h-2z"/><path fill="#ff0000" d="M7 1h2v1h-2zM6 2h3v1h-3zM6 3h3v1h-3zM0 4h1v1h-1zM2 4h3v1h-3zM6 4h2v1h-2z"/><path fill="#00ff00" d="M11 1h2v1h-2zM10 2h3v1h-3zM10 3h3v1h-3zM11 4h2v1h-2z"/><path fill="#0000ff" d="M0 6h1v1h-1zM2 6h3v1h-3zM6 6h2v1h-2zM6 7h3v1h-3zM0 8h1v1h-1zM2 8h3v1h-3zM6 8h3v1h-3zM6 9h2v1h-2zM6 10h1v1h-1z"/><path fill="#ffff00" d="M10 6h2v1h-2zM11 7h2v1h-2zM11 8h2v1h-2zM11 9h2v1h-2zM12 10h1v1h-1z"/></svg>
<svg class="i" style="left:97px;top:579px" width="17" height="17" viewBox="0 0 17 17" ><path fill="#808000" d="M0 0h16v1h-16zM0 1h1v1h-1zM4 1h8v1h-8zM15 1h1v1h-1zM0 2h1v1h-1zM3 2h2v1h-2zM11 2h2v1h-2zM15 2h1v1h-1zM0 3h1v1h-1zM2 3h1v1h-1zM6 3h4v1h-4zM13 3h1v1h-1zM15 3h1v1h-1zM0 4h3v1h-3zM5 4h2v1h-2zM9 4h3v1h-3zM14 4h2v1h-2zM0 5h2v1h-2zM4 5h3v1h-3zM9 5h4v1h-4zM15 5h1v1h-1zM0 6h2v1h-2zM4 6h3v1h-3zM9 6h4v1h-4zM15 6h1v1h-1zM0 7h2v1h-2zM4 7h3v1h-3zM12 7h1v1h-1zM15 7h1v1h-1zM0 8h2v1h-2zM4 8h3v1h-3zM12 8h1v1h-1zM15 8h1v1h-1zM0 9h2v1h-2zM4 9h9v1h-9zM15 9h1v1h-1zM0 10h3v1h-3zM5 10h7v1h-7zM14 10h2v1h-2zM0 11h1v1h-1zM2 11h1v1h-1zM6 11h4v1h-4zM13 11h1v1h-1zM15 11h1v1h-1zM0 12h1v1h-1zM3 12h2v1h-2zM11 12h2v1h-2zM15 12h1v1h-1zM0 13h1v1h-1zM4 13h8v1h-8zM15 13h1v1h-1zM0 14h16v1h-16zM0 15h16v1h-16z"/><path fill="#fff" d="M1 1h3v1h-3zM12 1h3v1h-3zM1 2h2v1h-2zM5 2h6v1h-6zM13 2h2v1h-2zM1 3h1v1h-1zM3 3h3v1h-3zM10 3h3v1h-3zM14 3h1v1h-1zM3 4h2v1h-2zM7 4h2v1h-2zM12 4h2v1h-2zM2 5h2v1h-2zM7 5h2v1h-2zM13 5h2v1h-2zM2 6h2v1h-2zM7 6h2v1h-2zM13 6h2v1h-2zM2 7h2v1h-2zM7 7h5v1h-5zM13 7h2v1h-2zM2 8h2v1h-2zM7 8h5v1h-5zM13 8h2v1h-2zM2 9h2v1h-2zM13 9h2v1h-2zM3 10h2v1h-2zM12 10h2v1h-2zM1 11h1v1h-1zM3 11h3v1h-3zM10 11h3v1h-3zM14 11h1v1h-1zM1 12h2v1h-2zM5 12h6v1h-6zM13 12h2v1h-2zM1 13h3v1h-3zM12 13h3v1h-3z"/></svg>
<svg class="i" style="left:120px;top:579px" width="17" height="16" viewBox="0 0 17 16" ><path fill="#c03000" d="M0 0h16v1h-16zM0 1h16v1h-16zM0 2h2v1h-2zM14 2h2v1h-2zM0 3h2v1h-2zM3 3h10v1h-10zM14 3h2v1h-2zM0 4h2v1h-2zM3 4h5v1h-5zM12 4h1v1h-1zM14 4h2v1h-2zM0 5h2v1h-2zM3 5h2v1h-2zM7 5h6v1h-6zM14 5h2v1h-2zM0 6h2v1h-2zM3 6h1v1h-1zM6 6h2v1h-2zM12 6h1v1h-1zM14 6h2v1h-2zM0 7h2v1h-2zM3 7h1v1h-1zM6 7h7v1h-7zM14 7h2v1h-2zM0 8h2v1h-2zM3 8h1v1h-1zM7 8h2v1h-2zM11 8h2v1h-2zM14 8h2v1h-2zM0 9h2v1h-2zM3 9h1v1h-1zM11 9h2v1h-2zM14 9h2v1h-2zM0 10h2v1h-2zM3 10h2v1h-2zM10 10h3v1h-3zM14 10h2v1h-2zM0 11h2v1h-2zM3 11h10v1h-10zM14 11h2v1h-2zM0 12h2v1h-2zM14 12h2v1h-2zM0 13h16v1h-16zM0 14h16v1h-16z"/><path fill="#fff" d="M2 2h12v1h-12zM2 3h1v1h-1zM13 3h1v1h-1zM2 4h1v1h-1zM8 4h4v1h-4zM13 4h1v1h-1zM2 5h1v1h-1zM5 5h2v1h-2zM13 5h1v1h-1zM2 6h1v1h-1zM4 6h2v1h-2zM8 6h4v1h-4zM13 6h1v1h-1zM2 7h1v1h-1zM4 7h2v1h-2zM13 7h1v1h-1zM2 8h1v1h-1zM4 8h3v1h-3zM9 8h2v1h-2zM13 8h1v1h-1zM2 9h1v1h-1zM4 9h7v1h-7zM13 9h1v1h-1zM2 10h1v1h-1zM5 10h5v1h-5zM13 10h1v1h-1zM2 11h1v1h-1zM13 11h1v1h-1zM2 12h12v1h-12z"/></svg>
<svg class="i" style="left:143px;top:579px" width="17" height="16" viewBox="0 0 17 16" ><path fill="#208020" d="M0 0h16v1h-16zM0 1h16v1h-16zM0 2h2v1h-2zM14 2h2v1h-2zM0 3h2v1h-2zM3 3h2v1h-2zM11 3h2v1h-2zM14 3h2v1h-2zM0 4h2v1h-2zM4 4h3v1h-3zM10 4h2v1h-2zM14 4h2v1h-2zM0 5h2v1h-2zM5 5h3v1h-3zM9 5h2v1h-2zM14 5h2v1h-2zM0 6h2v1h-2zM6 6h4v1h-4zM14 6h2v1h-2zM0 7h2v1h-2zM6 7h4v1h-4zM14 7h2v1h-2zM0 8h2v1h-2zM5 8h2v1h-2zM8 8h3v1h-3zM14 8h2v1h-2zM0 9h2v1h-2zM4 9h2v1h-2zM9 9h3v1h-3zM14 9h2v1h-2zM0 10h2v1h-2zM3 10h2v1h-2zM10 10h3v1h-3zM14 10h2v1h-2zM0 11h2v1h-2zM13 11h3v1h-3zM0 12h2v1h-2zM14 12h2v1h-2zM0 13h16v1h-16zM0 14h16v1h-16z"/><path fill="#fff" d="M2 2h12v1h-12zM2 3h1v1h-1zM5 3h6v1h-6zM13 3h1v1h-1zM2 4h2v1h-2zM7 4h3v1h-3zM12 4h2v1h-2zM2 5h3v1h-3zM8 5h1v1h-1zM11 5h3v1h-3zM2 6h4v1h-4zM10 6h4v1h-4zM2 7h4v1h-4zM10 7h4v1h-4zM2 8h3v1h-3zM7 8h1v1h-1zM11 8h3v1h-3zM2 9h2v1h-2zM6 9h3v1h-3zM12 9h2v1h-2zM2 10h1v1h-1zM5 10h5v1h-5zM13 10h1v1h-1zM2 11h11v1h-11zM2 12h12v1h-12z"/></svg>
<svg class="i" style="left:166px;top:579px" width="17" height="15" viewBox="0 0 17 15" ><path fill="#0000c0" d="M0 0h16v1h-16zM0 1h16v1h-16zM0 2h2v1h-2zM14 2h2v1h-2zM0 3h2v1h-2zM14 3h2v1h-2zM0 4h16v1h-16zM0 5h3v1h-3zM4 5h2v1h-2zM7 5h2v1h-2zM10 5h2v1h-2zM13 5h3v1h-3zM0 6h3v1h-3zM4 6h2v1h-2zM7 6h2v1h-2zM10 6h2v1h-2zM13 6h3v1h-3zM0 7h3v1h-3zM4 7h1v1h-1zM8 7h1v1h-1zM10 7h1v1h-1zM13 7h3v1h-3zM0 8h3v1h-3zM6 8h1v1h-1zM10 8h1v1h-1zM12 8h4v1h-4zM0 9h3v1h-3zM5 9h2v1h-2zM9 9h2v1h-2zM12 9h4v1h-4zM0 10h2v1h-2zM12 10h4v1h-4zM0 11h2v1h-2zM14 11h2v1h-2zM0 12h16v1h-16zM0 13h16v1h-16z"/><path fill="#fff" d="M2 2h12v1h-12zM2 3h12v1h-12zM3 5h1v1h-1zM6 5h1v1h-1zM9 5h1v1h-1zM12 5h1v1h-1zM3 6h1v1h-1zM6 6h1v1h-1zM9 6h1v1h-1zM12 6h1v1h-1zM3 7h1v1h-1zM5 7h3v1h-3zM9 7h1v1h-1zM11 7h2v1h-2zM3 8h3v1h-3zM7 8h3v1h-3zM11 8h1v1h-1zM3 9h2v1h-2zM7 9h2v1h-2zM11 9h1v1h-1zM2 10h10v1h-10zM2 11h12v1h-12z"/></svg>
<svg class="i" style="left:518px;top:580px" width="18" height="15" viewBox="0 0 18 15" ><path fill="#000" d="M3 0h10v1h-10zM3 1h1v1h-1zM12 1h2v1h-2zM12 2h1v1h-1zM14 2h1v1h-1zM12 3h4v1h-4zM15 4h1v1h-1zM15 5h1v1h-1zM15 6h1v1h-1zM15 7h1v1h-1zM15 8h1v1h-1zM15 9h1v1h-1zM3 10h1v1h-1zM15 10h1v1h-1zM3 11h1v1h-1zM15 11h1v1h-1zM3 12h1v1h-1zM15 12h1v1h-1zM3 13h13v1h-13z"/><path fill="#fff" d="M4 1h8v1h-8zM10 2h2v1h-2zM13 2h1v1h-1zM1 3h8v1h-8zM10 3h2v1h-2zM1 4h1v1h-1zM3 4h1v1h-1zM6 4h1v1h-1zM8 4h1v1h-1zM12 4h3v1h-3zM1 5h1v1h-1zM3 5h1v1h-1zM6 5h1v1h-1zM8 5h1v1h-1zM10 5h5v1h-5zM1 6h2v1h-2zM4 6h2v1h-2zM7 6h2v1h-2zM13 6h2v1h-2zM1 7h2v1h-2zM4 7h2v1h-2zM7 7h2v1h-2zM10 7h5v1h-5zM1 8h8v1h-8zM13 8h2v1h-2zM10 9h5v1h-5zM4 10h2v1h-2zM13 10h2v1h-2zM4 11h11v1h-11zM4 12h11v1h-11z"/><path fill="#0000c0" d="M0 2h10v1h-10zM0 3h1v1h-1zM9 3h1v1h-1zM0 4h1v1h-1zM2 4h1v1h-1zM4 4h2v1h-2zM7 4h1v1h-1zM9 4h1v1h-1zM0 5h1v1h-1zM2 5h1v1h-1zM4 5h2v1h-2zM7 5h1v1h-1zM9 5h1v1h-1zM0 6h1v1h-1zM3 6h1v1h-1zM6 6h1v1h-1zM9 6h1v1h-1zM0 7h1v1h-1zM3 7h1v1h-1zM6 7h1v1h-1zM9 7h1v1h-1zM0 8h1v1h-1zM9 8h1v1h-1zM0 9h10v1h-10z"/><path fill="#808080" d="M10 4h2v1h-2zM10 6h3v1h-3zM10 8h3v1h-3zM6 10h7v1h-7z"/></svg>
<svg class="i" style="left:705px;top:579px" width="17" height="16" viewBox="0 0 17 16" ><path fill="#fff" d="M0 0h8v1h-8zM0 1h1v1h-1zM2 1h1v1h-1zM4 1h2v1h-2zM7 1h1v1h-1zM0 2h8v1h-8zM0 3h1v1h-1zM2 3h1v1h-1zM4 3h2v1h-2zM7 3h1v1h-1zM9 3h1v1h-1zM11 3h1v1h-1zM13 3h1v1h-1zM8 4h6v1h-6zM1 5h13v1h-13zM1 6h7v1h-7zM13 6h1v1h-1zM1 7h6v1h-6zM10 7h1v1h-1zM1 8h5v1h-5zM9 8h3v1h-3zM1 9h5v1h-5zM8 9h2v1h-2zM11 9h2v1h-2zM1 10h5v1h-5zM8 10h2v1h-2zM12 10h1v1h-1zM1 11h5v1h-5zM8 11h5v1h-5zM9 12h3v1h-3z"/><path fill="#0000ff" d="M1 1h1v1h-1zM3 1h1v1h-1zM6 1h1v1h-1zM1 3h1v1h-1zM3 3h1v1h-1zM6 3h1v1h-1zM10 9h1v1h-1zM10 10h2v1h-2z"/><path fill="#000" d="M8 1h7v1h-7zM14 2h1v1h-1zM14 3h1v1h-1zM0 4h8v1h-8zM14 4h1v1h-1zM14 5h1v1h-1zM8 6h1v1h-1zM12 6h1v1h-1zM14 6h1v1h-1zM7 7h1v1h-1zM13 7h2v1h-2zM6 8h1v1h-1zM14 8h1v1h-1zM6 9h1v1h-1zM14 9h1v1h-1zM6 10h1v1h-1zM14 10h1v1h-1zM6 11h1v1h-1zM14 11h1v1h-1zM1 12h6v1h-6zM14 12h1v1h-1zM7 13h1v1h-1zM13 13h1v1h-1zM8 14h5v1h-5z"/><path fill="#000080" d="M8 2h6v1h-6zM8 3h1v1h-1zM10 3h1v1h-1zM12 3h1v1h-1z"/><path fill="#ff0000" d="M9 6h3v1h-3zM8 7h2v1h-2zM11 7h2v1h-2zM7 8h2v1h-2zM12 8h2v1h-2zM7 9h1v1h-1zM13 9h1v1h-1zM7 10h1v1h-1zM13 10h1v1h-1zM7 11h1v1h-1zM13 11h1v1h-1zM7 12h2v1h-2zM12 12h2v1h-2zM8 13h5v1h-5z"/></svg>
<svg class="i" style="left:739px;top:579px" width="17" height="16" viewBox="0 0 17 16" ><path fill="#000" d="M7 0h2v1h-2zM6 1h1v1h-1zM8 1h1v1h-1zM5 2h1v1h-1zM8 2h2v1h-2zM4 3h1v1h-1zM8 3h1v1h-1zM10 3h1v1h-1zM3 4h1v1h-1zM8 4h1v1h-1zM10 4h1v1h-1zM0 5h3v1h-3zM8 5h1v1h-1zM10 5h1v1h-1zM0 6h1v1h-1zM8 6h2v1h-2zM11 6h1v1h-1zM0 7h1v1h-1zM8 7h2v1h-2zM11 7h1v1h-1zM0 8h1v1h-1zM8 8h2v1h-2zM11 8h1v1h-1zM0 9h3v1h-3zM8 9h1v1h-1zM10 9h1v1h-1zM3 10h1v1h-1zM8 10h1v1h-1zM10 10h1v1h-1zM4 11h1v1h-1zM8 11h1v1h-1zM10 11h1v1h-1zM5 12h1v1h-1zM8 12h2v1h-2zM6 13h1v1h-1zM8 13h1v1h-1zM7 14h2v1h-2z"/><path fill="#ffff00" d="M7 1h1v1h-1zM6 2h1v1h-1zM5 3h1v1h-1zM7 3h1v1h-1zM4 4h1v1h-1zM6 4h1v1h-1zM3 5h1v1h-1zM5 5h1v1h-1zM7 5h1v1h-1zM1 6h2v1h-2zM4 6h1v1h-1zM6 6h1v1h-1zM1 7h1v1h-1zM3 7h1v1h-1zM5 7h1v1h-1zM7 7h1v1h-1zM1 8h2v1h-2zM4 8h1v1h-1zM6 8h1v1h-1zM3 9h1v1h-1zM5 9h1v1h-1zM7 9h1v1h-1zM4 10h1v1h-1zM6 10h1v1h-1zM5 11h1v1h-1zM7 11h1v1h-1zM6 12h1v1h-1zM7 13h1v1h-1z"/><path fill="#fff" d="M7 2h1v1h-1zM6 3h1v1h-1zM5 4h1v1h-1zM7 4h1v1h-1zM4 5h1v1h-1zM6 5h1v1h-1zM3 6h1v1h-1zM5 6h1v1h-1zM7 6h1v1h-1zM2 7h1v1h-1zM4 7h1v1h-1zM6 7h1v1h-1zM3 8h1v1h-1zM5 8h1v1h-1zM7 8h1v1h-1zM4 9h1v1h-1zM6 9h1v1h-1zM5 10h1v1h-1zM7 10h1v1h-1zM6 11h1v1h-1zM7 12h1v1h-1z"/><path fill="#c0c0c0" d="M9 3h1v1h-1zM9 4h1v1h-1zM9 5h1v1h-1zM10 6h1v1h-1zM10 7h1v1h-1zM10 8h1v1h-1zM9 9h1v1h-1zM9 10h1v1h-1zM9 11h1v1h-1z"/><path fill="#808080" d="M12 4h1v1h-1zM13 5h1v1h-1zM12 7h3v1h-3zM13 9h1v1h-1zM12 10h1v1h-1z"/></svg>
<svg class="i" style="left:429px;top:580px" width="17" height="16" viewBox="0 0 17 16" ><path fill="#000" d="M2 0h5v1h-5zM1 1h1v1h-1zM7 1h1v1h-1zM0 2h1v1h-1zM3 2h3v1h-3zM8 2h6v1h-6zM0 3h1v1h-1zM2 3h1v1h-1zM6 3h1v1h-1zM13 3h1v1h-1zM0 4h1v1h-1zM7 4h1v1h-1zM13 4h1v1h-1zM0 5h2v1h-2zM7 5h1v1h-1zM13 5h1v1h-1zM0 6h1v1h-1zM7 6h1v1h-1zM13 6h1v1h-1zM0 7h1v1h-1zM2 7h1v1h-1zM6 7h3v1h-3zM13 7h1v1h-1zM0 8h1v1h-1zM3 8h3v1h-3zM7 8h1v1h-1zM9 8h1v1h-1zM13 8h1v1h-1zM0 9h1v1h-1zM8 9h1v1h-1zM10 9h1v1h-1zM13 9h1v1h-1zM0 10h1v1h-1zM9 10h1v1h-1zM11 10h1v1h-1zM13 10h1v1h-1zM0 11h11v1h-11zM13 11h1v1h-1zM11 12h1v1h-1zM14 12h1v1h-1zM12 13h1v1h-1zM14 13h1v1h-1zM13 14h1v1h-1z"/><path fill="#ffff90" d="M2 1h5v1h-5zM1 2h1v1h-1zM7 2h1v1h-1zM1 3h1v1h-1zM8 3h5v1h-5zM8 4h5v1h-5zM8 5h5v1h-5zM8 6h5v1h-5zM1 7h1v1h-1zM9 7h4v1h-4zM1 8h1v1h-1zM10 8h3v1h-3zM1 9h7v1h-7zM11 9h2v1h-2zM1 10h8v1h-8zM12 10h1v1h-1z"/><path fill="#808080" d="M2 2h1v1h-1zM6 2h1v1h-1zM7 3h1v1h-1zM1 4h1v1h-1zM1 6h1v1h-1zM2 8h1v1h-1zM6 8h1v1h-1z"/><path fill="#00ffff" d="M3 3h1v1h-1zM5 3h1v1h-1zM2 4h1v1h-1zM4 4h1v1h-1zM6 4h1v1h-1zM3 5h1v1h-1zM5 5h1v1h-1zM2 6h1v1h-1zM4 6h1v1h-1zM6 6h1v1h-1zM3 7h1v1h-1zM5 7h1v1h-1zM12 11h1v1h-1zM13 12h1v1h-1z"/><path fill="#fff" d="M4 3h1v1h-1zM3 4h1v1h-1zM5 4h1v1h-1zM2 5h1v1h-1zM4 5h1v1h-1zM6 5h1v1h-1zM3 6h1v1h-1zM5 6h1v1h-1zM4 7h1v1h-1z"/><path fill="#0000ff" d="M8 8h1v1h-1zM9 9h1v1h-1zM10 10h1v1h-1zM11 11h1v1h-1zM12 12h1v1h-1zM13 13h1v1h-1z"/></svg>
<svg class="i" style="left:74px;top:579px" width="17" height="16" viewBox="0 0 17 16" style="shape-rendering:auto"><ellipse cx="8" cy="8.500" rx="8" ry="4" transform="rotate(-35 8 8.500)" fill="none" stroke="#3080f0" stroke-width="1.300"/></svg>
<span class="t" style="left:75px;top:573.18px;font-size:24px;color:#1858e0;font-family:'Liberation Sans',sans-serif;font-weight:bold;transform:scale(1.0,1.05);transform-origin:0 0.8465em;-webkit-text-stroke:0.8px #1858e0;">e</span>
<svg class="i" style="left:190px;top:580px" width="14" height="15" viewBox="0 0 14 15" style="shape-rendering:auto"><path d="M1 0l4 1 2 3-3 0z" fill="#00a000"/><path d="M6 4c3-2 7-1 7 4s-3 7-6 7-5-2-5-4l1.500-1-1-2c0-2 1-4 3.500-4z" fill="#f00" stroke="#000" stroke-width="1"/><rect x="3" y="5" width="4" height="1" fill="#ff80c0"/></svg>
<svg class="i" style="left:212px;top:580px" width="16" height="16" viewBox="0 0 16 16" style="shape-rendering:auto"><circle cx="7.500" cy="7.500" r="6.300" fill="#fff" stroke="#58a8ff" stroke-width="2.200"/><circle cx="7.500" cy="7.500" r="7.200" fill="none" stroke="#3070d8" stroke-width="0.700"/></svg>
<span class="t" style="left:216.5px;top:582.61px;font-size:10.5px;color:#1050d0;font-family:'Liberation Sans',sans-serif;font-weight:bold;">1</span>
<svg class="i" style="left:251px;top:580px" width="16" height="16" viewBox="0 0 16 16" style="shape-rendering:auto"><circle cx="7.500" cy="7.500" r="6.300" fill="#fff" stroke="#58a8ff" stroke-width="2.200"/><circle cx="7.500" cy="7.500" r="7.200" fill="none" stroke="#3070d8" stroke-width="0.700"/></svg>
<span class="t" style="left:255.5px;top:582.61px;font-size:10.5px;color:#1050d0;font-family:'Liberation Sans',sans-serif;font-weight:bold;">1</span>
</body></html>
